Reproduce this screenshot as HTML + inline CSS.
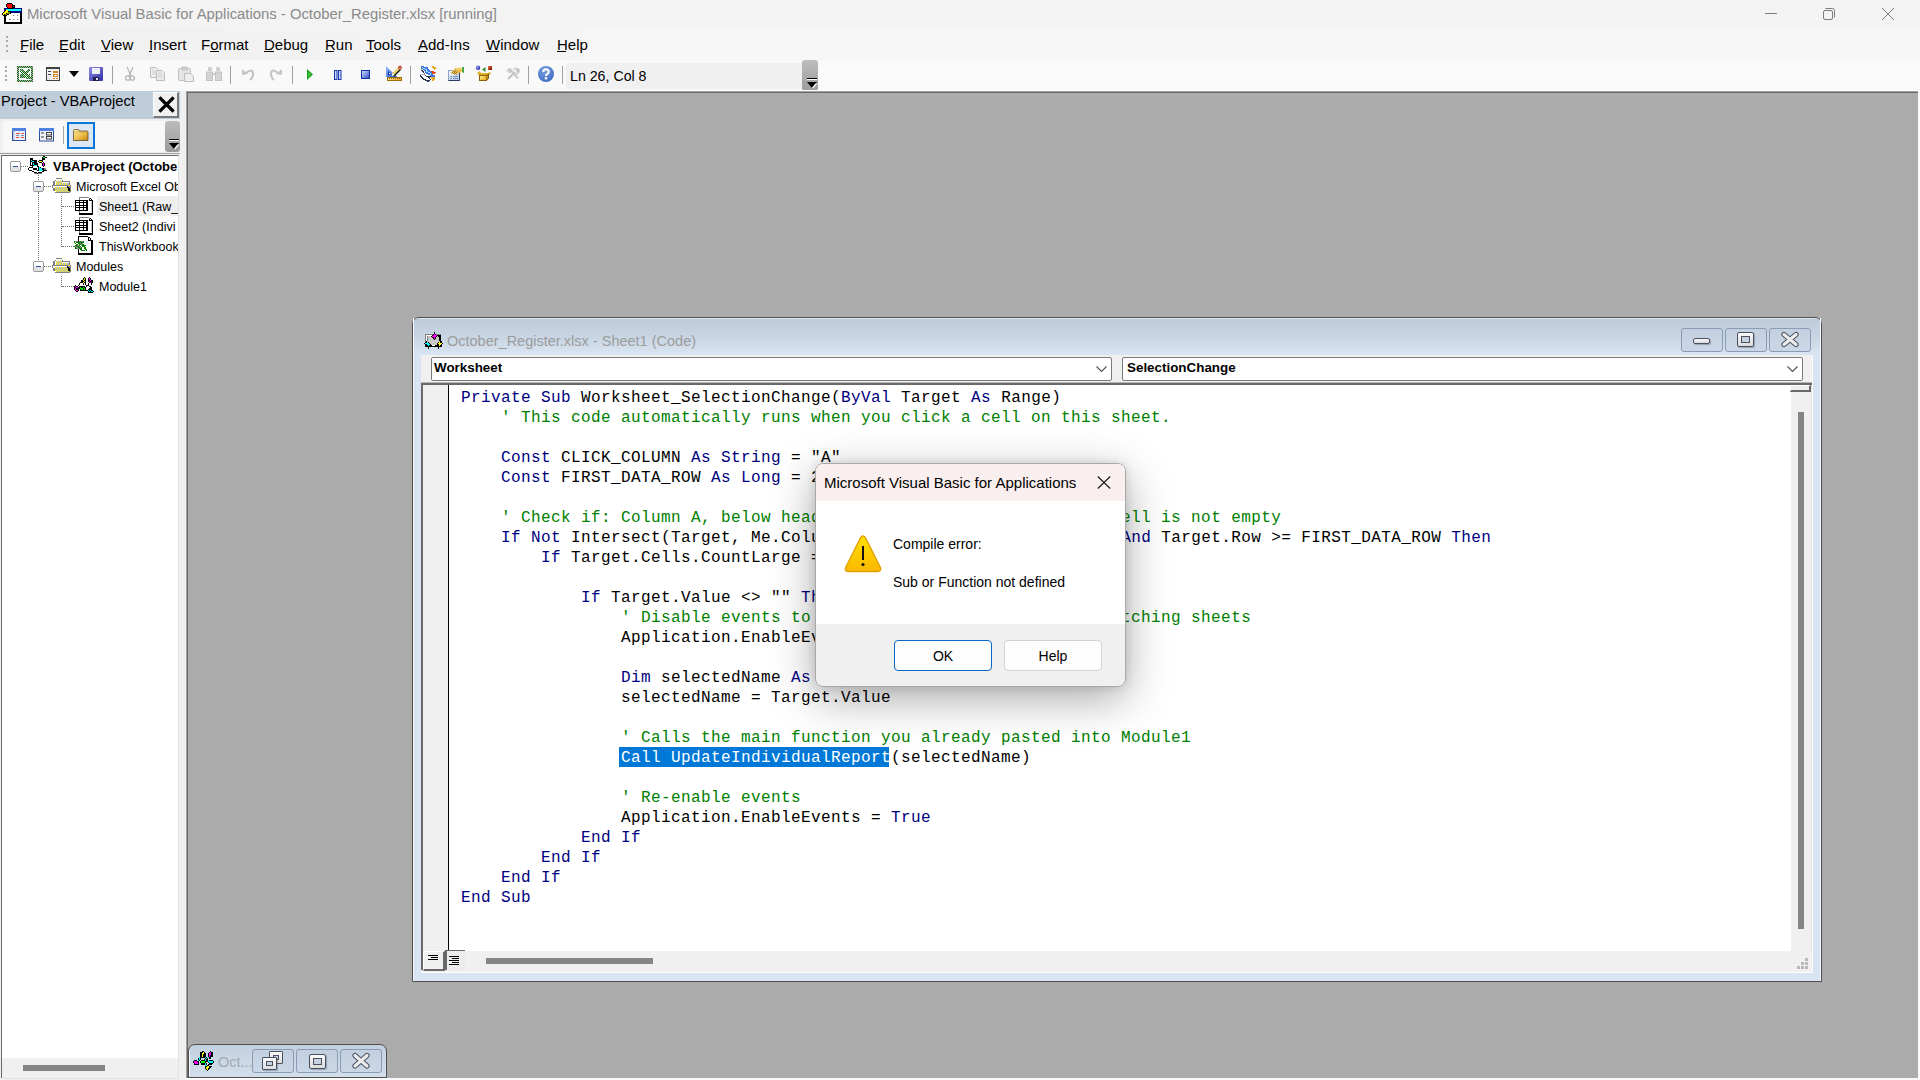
<!DOCTYPE html>
<html><head><meta charset="utf-8">
<style>
*{margin:0;padding:0;box-sizing:border-box}
html,body{width:1920px;height:1080px;overflow:hidden;background:#fafafa;font-family:"Liberation Sans",sans-serif}
.a{position:absolute}
.t{position:absolute;white-space:nowrap;line-height:1}
svg{position:absolute;overflow:visible}
#titlebar{left:0;top:0;width:1920px;height:29px;background:#f3f3f3}
#titletext{left:27px;top:7px;font-size:14.85px;color:#8a8a8a}
#menubar{left:0;top:29px;width:583px;height:31px;background:linear-gradient(to right,#f0f0f0,#f4f4f4)}
#menubar2{left:583px;top:29px;width:1337px;height:31px;background:#f7f7f7}
.menu{top:37px;font-size:15px;color:#000}
.u{position:absolute;height:1px;background:#000;top:51px}
#toolbar{left:3px;top:60px;width:815px;height:31px;background:#f9f9f9;border-radius:4px 0 0 0}
.sep{position:absolute;top:66px;width:1px;height:18px;background:#a0a0a0}
.grip{position:absolute;width:2px;height:2px;background:#a8a8a8}
#mdi{left:186px;top:91px;width:1732px;height:987px;background:#ababab;border-left:1px solid #a2a2a2;border-top:1px solid #a2a2a2;box-shadow:inset 1px 1px 0 #696969}
#proj{left:0;top:91px;width:186px;height:989px;background:#f0f0f0}
.code{position:absolute;font-family:"Liberation Mono",monospace;font-size:16px;letter-spacing:0.4px;line-height:20px;white-space:pre;color:#000}
.kw{color:#00007f}
.cm{color:#008000}
.sel{color:#fff}
.cbtn{width:42px;height:24px;border:1px solid #8b9bb5;border-radius:3px;background:linear-gradient(#c3d0df,#cad7e6)}
.combo{background:#fff;border:1px solid #7a7a7a;border-radius:2px}
</style></head><body>
<!-- title bar -->
<div id="titlebar" class="a"></div>
<svg style="left:0px;top:0px" width="24" height="24" viewBox="0 0 24 24" shape-rendering="crispEdges"><rect x="7" y="3" width="5" height="1" fill="#000"/><rect x="6" y="4" width="1" height="1" fill="#000"/><rect x="7" y="4" width="5" height="1" fill="#ff0000"/><rect x="12" y="4" width="1" height="1" fill="#000"/><rect x="6" y="5" width="1" height="1" fill="#000"/><rect x="7" y="5" width="5" height="1" fill="#ff0000"/><rect x="12" y="5" width="3" height="1" fill="#000"/><rect x="6" y="6" width="1" height="1" fill="#000"/><rect x="7" y="6" width="5" height="1" fill="#ff0000"/><rect x="12" y="6" width="1" height="1" fill="#000"/><rect x="13" y="6" width="1" height="1" fill="#ff0000"/><rect x="14" y="6" width="1" height="1" fill="#000"/><rect x="7" y="7" width="1" height="1" fill="#000"/><rect x="8" y="7" width="4" height="1" fill="#ff0000"/><rect x="12" y="7" width="3" height="1" fill="#000"/><rect x="4" y="8" width="4" height="1" fill="#000080"/><rect x="8" y="8" width="5" height="1" fill="#000"/><rect x="13" y="8" width="9" height="1" fill="#000080"/><rect x="4" y="9" width="2" height="1" fill="#000080"/><rect x="6" y="9" width="15" height="1" fill="#00ffff"/><rect x="21" y="9" width="1" height="1" fill="#000080"/><rect x="4" y="10" width="1" height="1" fill="#000080"/><rect x="5" y="10" width="1" height="1" fill="#000"/><rect x="6" y="10" width="2" height="1" fill="#ffff00"/><rect x="8" y="10" width="13" height="1" fill="#00ffff"/><rect x="21" y="10" width="1" height="1" fill="#000080"/><rect x="4" y="11" width="1" height="1" fill="#000"/><rect x="5" y="11" width="3" height="1" fill="#ffff00"/><rect x="8" y="11" width="2" height="1" fill="#000"/><rect x="10" y="11" width="12" height="1" fill="#000080"/><rect x="3" y="12" width="1" height="1" fill="#000"/><rect x="4" y="12" width="4" height="1" fill="#ffff00"/><rect x="8" y="12" width="2" height="1" fill="#808000"/><rect x="10" y="12" width="1" height="1" fill="#000"/><rect x="11" y="12" width="11" height="1" fill="#000080"/><rect x="2" y="13" width="1" height="1" fill="#000"/><rect x="3" y="13" width="3" height="1" fill="#ffff00"/><rect x="6" y="13" width="1" height="1" fill="#000"/><rect x="7" y="13" width="3" height="1" fill="#808000"/><rect x="10" y="13" width="1" height="1" fill="#000"/><rect x="11" y="13" width="9" height="1" fill="#fff"/><rect x="20" y="13" width="2" height="1" fill="#000"/><rect x="2" y="14" width="1" height="1" fill="#000"/><rect x="3" y="14" width="1" height="1" fill="#ffff00"/><rect x="4" y="14" width="1" height="1" fill="#000"/><rect x="5" y="14" width="2" height="1" fill="#808000"/><rect x="7" y="14" width="2" height="1" fill="#000"/><rect x="9" y="14" width="11" height="1" fill="#fff"/><rect x="20" y="14" width="2" height="1" fill="#000"/><rect x="3" y="15" width="4" height="1" fill="#000"/><rect x="7" y="15" width="6" height="1" fill="#fff"/><rect x="13" y="15" width="1" height="1" fill="#808080"/><rect x="14" y="15" width="3" height="1" fill="#fff"/><rect x="17" y="15" width="1" height="1" fill="#808080"/><rect x="18" y="15" width="2" height="1" fill="#fff"/><rect x="20" y="15" width="2" height="1" fill="#000"/><rect x="4" y="16" width="2" height="1" fill="#000"/><rect x="6" y="16" width="14" height="1" fill="#fff"/><rect x="20" y="16" width="2" height="1" fill="#000"/><rect x="4" y="17" width="2" height="1" fill="#000"/><rect x="6" y="17" width="14" height="1" fill="#fff"/><rect x="20" y="17" width="2" height="1" fill="#000"/><rect x="4" y="18" width="2" height="1" fill="#000"/><rect x="6" y="18" width="14" height="1" fill="#fff"/><rect x="20" y="18" width="2" height="1" fill="#000"/><rect x="4" y="19" width="2" height="1" fill="#000"/><rect x="6" y="19" width="3" height="1" fill="#fff"/><rect x="9" y="19" width="2" height="1" fill="#808080"/><rect x="11" y="19" width="2" height="1" fill="#fff"/><rect x="13" y="19" width="1" height="1" fill="#808080"/><rect x="14" y="19" width="3" height="1" fill="#fff"/><rect x="17" y="19" width="1" height="1" fill="#808080"/><rect x="18" y="19" width="2" height="1" fill="#fff"/><rect x="20" y="19" width="2" height="1" fill="#000"/><rect x="4" y="20" width="2" height="1" fill="#000"/><rect x="6" y="20" width="14" height="1" fill="#fff"/><rect x="20" y="20" width="2" height="1" fill="#000"/><rect x="4" y="21" width="2" height="1" fill="#000"/><rect x="6" y="21" width="14" height="1" fill="#fff"/><rect x="20" y="21" width="2" height="1" fill="#000"/><rect x="4" y="22" width="18" height="1" fill="#000"/><rect x="4" y="23" width="18" height="1" fill="#000"/></svg>
<div id="titletext" class="t">Microsoft Visual Basic for Applications - October_Register.xlsx [running]</div>
<div class="a" style="left:1765px;top:13px;width:12px;height:1px;background:#7d7d7d"></div>
<svg style="left:1822px;top:7px" width="14" height="14" viewBox="0 0 14 14">
  <rect x="1.5" y="3.5" width="9" height="9" rx="1.5" fill="none" stroke="#7d7d7d"/>
  <path d="M3.5 1.5 H10.5 Q12.5 1.5 12.5 3.5 V10.5" fill="none" stroke="#7d7d7d"/>
</svg>
<svg style="left:1881px;top:7px" width="14" height="14" viewBox="0 0 14 14">
  <path d="M1 1 L13 13 M13 1 L1 13" stroke="#7d7d7d" stroke-width="1"/>
</svg>

<!-- menu bar -->
<div id="menubar" class="a"></div><div id="menubar2" class="a"></div>
<div class="grip" style="left:6px;top:36px"></div><div class="grip" style="left:6px;top:40px"></div><div class="grip" style="left:6px;top:45px"></div><div class="grip" style="left:6px;top:50px"></div>
<div class="t menu" style="left:20px">File</div><div class="u" style="left:20px;width:7px"></div>
<div class="t menu" style="left:59px">Edit</div><div class="u" style="left:59px;width:8px"></div>
<div class="t menu" style="left:101px">View</div><div class="u" style="left:101px;width:9px"></div>
<div class="t menu" style="left:149px">Insert</div><div class="u" style="left:149px;width:3px"></div>
<div class="t menu" style="left:201px">Format</div><div class="u" style="left:210px;width:9px"></div>
<div class="t menu" style="left:264px">Debug</div><div class="u" style="left:264px;width:10px"></div>
<div class="t menu" style="left:325px">Run</div><div class="u" style="left:325px;width:9px"></div>
<div class="t menu" style="left:366px">Tools</div><div class="u" style="left:366px;width:8px"></div>
<div class="t menu" style="left:418px">Add-Ins</div><div class="u" style="left:418px;width:9px"></div>
<div class="t menu" style="left:486px">Window</div><div class="u" style="left:486px;width:13px"></div>
<div class="t menu" style="left:557px">Help</div><div class="u" style="left:557px;width:9px"></div>

<!-- toolbar -->
<div id="toolbar" class="a"></div>
<div class="grip" style="left:5px;top:66px"></div><div class="grip" style="left:5px;top:70px"></div><div class="grip" style="left:5px;top:75px"></div><div class="grip" style="left:5px;top:79px"></div>
<!-- excel -->
<svg style="left:17px;top:66px" width="16" height="16" viewBox="0 0 16 16" shape-rendering="crispEdges"><rect x="0" y="0" width="1" height="1" fill="#008000"/><rect x="1" y="0" width="1" height="1" fill="#b49ab4"/><rect x="2" y="0" width="1" height="1" fill="#008000"/><rect x="3" y="0" width="1" height="1" fill="#b49ab4"/><rect x="4" y="0" width="1" height="1" fill="#008000"/><rect x="5" y="0" width="1" height="1" fill="#b49ab4"/><rect x="6" y="0" width="1" height="1" fill="#008000"/><rect x="7" y="0" width="1" height="1" fill="#b49ab4"/><rect x="8" y="0" width="1" height="1" fill="#008000"/><rect x="9" y="0" width="1" height="1" fill="#b49ab4"/><rect x="10" y="0" width="1" height="1" fill="#008000"/><rect x="11" y="0" width="1" height="1" fill="#b49ab4"/><rect x="12" y="0" width="1" height="1" fill="#008000"/><rect x="13" y="0" width="1" height="1" fill="#b49ab4"/><rect x="14" y="0" width="1" height="1" fill="#008000"/><rect x="15" y="0" width="1" height="1" fill="#b49ab4"/><rect x="0" y="1" width="1" height="1" fill="#b49ab4"/><rect x="1" y="1" width="1" height="1" fill="#008000"/><rect x="2" y="1" width="1" height="1" fill="#b49ab4"/><rect x="3" y="1" width="1" height="1" fill="#008000"/><rect x="4" y="1" width="1" height="1" fill="#b49ab4"/><rect x="5" y="1" width="1" height="1" fill="#008000"/><rect x="6" y="1" width="1" height="1" fill="#b49ab4"/><rect x="7" y="1" width="1" height="1" fill="#008000"/><rect x="8" y="1" width="1" height="1" fill="#b49ab4"/><rect x="9" y="1" width="1" height="1" fill="#008000"/><rect x="10" y="1" width="1" height="1" fill="#b49ab4"/><rect x="11" y="1" width="1" height="1" fill="#008000"/><rect x="12" y="1" width="1" height="1" fill="#b49ab4"/><rect x="13" y="1" width="1" height="1" fill="#008000"/><rect x="14" y="1" width="1" height="1" fill="#b49ab4"/><rect x="15" y="1" width="1" height="1" fill="#008000"/><rect x="0" y="2" width="1" height="1" fill="#008000"/><rect x="1" y="2" width="1" height="1" fill="#b49ab4"/><rect x="2" y="2" width="12" height="1" fill="#fff"/><rect x="14" y="2" width="1" height="1" fill="#008000"/><rect x="15" y="2" width="1" height="1" fill="#b49ab4"/><rect x="0" y="3" width="1" height="1" fill="#b49ab4"/><rect x="1" y="3" width="1" height="1" fill="#008000"/><rect x="2" y="3" width="1" height="1" fill="#fff"/><rect x="3" y="3" width="1" height="1" fill="#008000"/><rect x="4" y="3" width="1" height="1" fill="#b49ab4"/><rect x="5" y="3" width="1" height="1" fill="#008000"/><rect x="6" y="3" width="5" height="1" fill="#fff"/><rect x="11" y="3" width="1" height="1" fill="#008000"/><rect x="12" y="3" width="1" height="1" fill="#b49ab4"/><rect x="13" y="3" width="1" height="1" fill="#fff"/><rect x="14" y="3" width="1" height="1" fill="#b49ab4"/><rect x="15" y="3" width="1" height="1" fill="#008000"/><rect x="0" y="4" width="1" height="1" fill="#008000"/><rect x="1" y="4" width="1" height="1" fill="#b49ab4"/><rect x="2" y="4" width="1" height="1" fill="#fff"/><rect x="3" y="4" width="1" height="1" fill="#b49ab4"/><rect x="4" y="4" width="1" height="1" fill="#008000"/><rect x="5" y="4" width="1" height="1" fill="#b49ab4"/><rect x="6" y="4" width="1" height="1" fill="#008000"/><rect x="7" y="4" width="3" height="1" fill="#fff"/><rect x="10" y="4" width="1" height="1" fill="#008000"/><rect x="11" y="4" width="1" height="1" fill="#b49ab4"/><rect x="12" y="4" width="1" height="1" fill="#008000"/><rect x="13" y="4" width="1" height="1" fill="#fff"/><rect x="14" y="4" width="1" height="1" fill="#008000"/><rect x="15" y="4" width="1" height="1" fill="#b49ab4"/><rect x="0" y="5" width="1" height="1" fill="#b49ab4"/><rect x="1" y="5" width="1" height="1" fill="#008000"/><rect x="2" y="5" width="1" height="1" fill="#fff"/><rect x="3" y="5" width="1" height="1" fill="#008000"/><rect x="4" y="5" width="1" height="1" fill="#fff"/><rect x="5" y="5" width="1" height="1" fill="#008000"/><rect x="6" y="5" width="1" height="1" fill="#b49ab4"/><rect x="7" y="5" width="1" height="1" fill="#008000"/><rect x="8" y="5" width="1" height="1" fill="#fff"/><rect x="9" y="5" width="1" height="1" fill="#008000"/><rect x="10" y="5" width="1" height="1" fill="#b49ab4"/><rect x="11" y="5" width="1" height="1" fill="#008000"/><rect x="12" y="5" width="2" height="1" fill="#fff"/><rect x="14" y="5" width="1" height="1" fill="#b49ab4"/><rect x="15" y="5" width="1" height="1" fill="#008000"/><rect x="0" y="6" width="1" height="1" fill="#008000"/><rect x="1" y="6" width="1" height="1" fill="#b49ab4"/><rect x="2" y="6" width="2" height="1" fill="#fff"/><rect x="4" y="6" width="1" height="1" fill="#008000"/><rect x="5" y="6" width="1" height="1" fill="#fff"/><rect x="6" y="6" width="1" height="1" fill="#008000"/><rect x="7" y="6" width="1" height="1" fill="#b49ab4"/><rect x="8" y="6" width="1" height="1" fill="#008000"/><rect x="9" y="6" width="1" height="1" fill="#b49ab4"/><rect x="10" y="6" width="1" height="1" fill="#008000"/><rect x="11" y="6" width="3" height="1" fill="#fff"/><rect x="14" y="6" width="1" height="1" fill="#008000"/><rect x="15" y="6" width="1" height="1" fill="#b49ab4"/><rect x="0" y="7" width="1" height="1" fill="#b49ab4"/><rect x="1" y="7" width="1" height="1" fill="#008000"/><rect x="2" y="7" width="3" height="1" fill="#fff"/><rect x="5" y="7" width="1" height="1" fill="#008000"/><rect x="6" y="7" width="1" height="1" fill="#fff"/><rect x="7" y="7" width="1" height="1" fill="#008000"/><rect x="8" y="7" width="1" height="1" fill="#b49ab4"/><rect x="9" y="7" width="1" height="1" fill="#008000"/><rect x="10" y="7" width="4" height="1" fill="#fff"/><rect x="14" y="7" width="1" height="1" fill="#b49ab4"/><rect x="15" y="7" width="1" height="1" fill="#008000"/><rect x="0" y="8" width="1" height="1" fill="#008000"/><rect x="1" y="8" width="1" height="1" fill="#b49ab4"/><rect x="2" y="8" width="1" height="1" fill="#fff"/><rect x="3" y="8" width="1" height="1" fill="#b49ab4"/><rect x="4" y="8" width="1" height="1" fill="#008000"/><rect x="5" y="8" width="1" height="1" fill="#b49ab4"/><rect x="6" y="8" width="1" height="1" fill="#008000"/><rect x="7" y="8" width="1" height="1" fill="#fff"/><rect x="8" y="8" width="1" height="1" fill="#008000"/><rect x="9" y="8" width="1" height="1" fill="#b49ab4"/><rect x="10" y="8" width="1" height="1" fill="#008000"/><rect x="11" y="8" width="1" height="1" fill="#fff"/><rect x="12" y="8" width="1" height="1" fill="#008000"/><rect x="13" y="8" width="1" height="1" fill="#fff"/><rect x="14" y="8" width="1" height="1" fill="#008000"/><rect x="15" y="8" width="1" height="1" fill="#b49ab4"/><rect x="0" y="9" width="1" height="1" fill="#b49ab4"/><rect x="1" y="9" width="1" height="1" fill="#008000"/><rect x="2" y="9" width="1" height="1" fill="#fff"/><rect x="3" y="9" width="1" height="1" fill="#008000"/><rect x="4" y="9" width="1" height="1" fill="#b49ab4"/><rect x="5" y="9" width="1" height="1" fill="#008000"/><rect x="6" y="9" width="1" height="1" fill="#b49ab4"/><rect x="7" y="9" width="1" height="1" fill="#008000"/><rect x="8" y="9" width="1" height="1" fill="#fff"/><rect x="9" y="9" width="1" height="1" fill="#008000"/><rect x="10" y="9" width="1" height="1" fill="#b49ab4"/><rect x="11" y="9" width="1" height="1" fill="#008000"/><rect x="12" y="9" width="1" height="1" fill="#b49ab4"/><rect x="13" y="9" width="1" height="1" fill="#fff"/><rect x="14" y="9" width="1" height="1" fill="#b49ab4"/><rect x="15" y="9" width="1" height="1" fill="#008000"/><rect x="0" y="10" width="1" height="1" fill="#008000"/><rect x="1" y="10" width="1" height="1" fill="#b49ab4"/><rect x="2" y="10" width="1" height="1" fill="#fff"/><rect x="3" y="10" width="1" height="1" fill="#b49ab4"/><rect x="4" y="10" width="1" height="1" fill="#008000"/><rect x="5" y="10" width="1" height="1" fill="#b49ab4"/><rect x="6" y="10" width="1" height="1" fill="#008000"/><rect x="7" y="10" width="1" height="1" fill="#b49ab4"/><rect x="8" y="10" width="1" height="1" fill="#008000"/><rect x="9" y="10" width="1" height="1" fill="#fff"/><rect x="10" y="10" width="1" height="1" fill="#008000"/><rect x="11" y="10" width="1" height="1" fill="#b49ab4"/><rect x="12" y="10" width="1" height="1" fill="#008000"/><rect x="13" y="10" width="1" height="1" fill="#fff"/><rect x="14" y="10" width="1" height="1" fill="#008000"/><rect x="15" y="10" width="1" height="1" fill="#b49ab4"/><rect x="0" y="11" width="1" height="1" fill="#b49ab4"/><rect x="1" y="11" width="1" height="1" fill="#008000"/><rect x="2" y="11" width="1" height="1" fill="#fff"/><rect x="3" y="11" width="1" height="1" fill="#008000"/><rect x="4" y="11" width="1" height="1" fill="#b49ab4"/><rect x="5" y="11" width="1" height="1" fill="#008000"/><rect x="6" y="11" width="1" height="1" fill="#b49ab4"/><rect x="7" y="11" width="1" height="1" fill="#008000"/><rect x="8" y="11" width="1" height="1" fill="#fff"/><rect x="9" y="11" width="1" height="1" fill="#008000"/><rect x="10" y="11" width="1" height="1" fill="#fff"/><rect x="11" y="11" width="1" height="1" fill="#008000"/><rect x="12" y="11" width="1" height="1" fill="#b49ab4"/><rect x="13" y="11" width="1" height="1" fill="#008000"/><rect x="14" y="11" width="1" height="1" fill="#b49ab4"/><rect x="15" y="11" width="1" height="1" fill="#008000"/><rect x="0" y="12" width="1" height="1" fill="#008000"/><rect x="1" y="12" width="1" height="1" fill="#b49ab4"/><rect x="2" y="12" width="7" height="1" fill="#fff"/><rect x="9" y="12" width="1" height="1" fill="#b49ab4"/><rect x="10" y="12" width="1" height="1" fill="#008000"/><rect x="11" y="12" width="1" height="1" fill="#b49ab4"/><rect x="12" y="12" width="1" height="1" fill="#008000"/><rect x="13" y="12" width="1" height="1" fill="#b49ab4"/><rect x="14" y="12" width="1" height="1" fill="#008000"/><rect x="15" y="12" width="1" height="1" fill="#b49ab4"/><rect x="0" y="13" width="1" height="1" fill="#b49ab4"/><rect x="1" y="13" width="1" height="1" fill="#008000"/><rect x="2" y="13" width="12" height="1" fill="#fff"/><rect x="14" y="13" width="1" height="1" fill="#b49ab4"/><rect x="15" y="13" width="1" height="1" fill="#008000"/><rect x="0" y="14" width="1" height="1" fill="#008000"/><rect x="1" y="14" width="1" height="1" fill="#b49ab4"/><rect x="2" y="14" width="1" height="1" fill="#008000"/><rect x="3" y="14" width="1" height="1" fill="#b49ab4"/><rect x="4" y="14" width="1" height="1" fill="#008000"/><rect x="5" y="14" width="1" height="1" fill="#b49ab4"/><rect x="6" y="14" width="1" height="1" fill="#008000"/><rect x="7" y="14" width="1" height="1" fill="#b49ab4"/><rect x="8" y="14" width="1" height="1" fill="#008000"/><rect x="9" y="14" width="1" height="1" fill="#b49ab4"/><rect x="10" y="14" width="1" height="1" fill="#008000"/><rect x="11" y="14" width="1" height="1" fill="#b49ab4"/><rect x="12" y="14" width="1" height="1" fill="#008000"/><rect x="13" y="14" width="1" height="1" fill="#b49ab4"/><rect x="14" y="14" width="1" height="1" fill="#008000"/><rect x="15" y="14" width="1" height="1" fill="#b49ab4"/><rect x="0" y="15" width="1" height="1" fill="#b49ab4"/><rect x="1" y="15" width="1" height="1" fill="#008000"/><rect x="2" y="15" width="1" height="1" fill="#b49ab4"/><rect x="3" y="15" width="1" height="1" fill="#008000"/><rect x="4" y="15" width="1" height="1" fill="#b49ab4"/><rect x="5" y="15" width="1" height="1" fill="#008000"/><rect x="6" y="15" width="1" height="1" fill="#b49ab4"/><rect x="7" y="15" width="1" height="1" fill="#008000"/><rect x="8" y="15" width="1" height="1" fill="#b49ab4"/><rect x="9" y="15" width="1" height="1" fill="#008000"/><rect x="10" y="15" width="1" height="1" fill="#b49ab4"/><rect x="11" y="15" width="1" height="1" fill="#008000"/><rect x="12" y="15" width="1" height="1" fill="#b49ab4"/><rect x="13" y="15" width="1" height="1" fill="#008000"/><rect x="14" y="15" width="1" height="1" fill="#b49ab4"/><rect x="15" y="15" width="1" height="1" fill="#008000"/></svg>
<!-- userform -->
<svg style="left:46px;top:67px" width="15" height="14" viewBox="0 0 15 14">
  <rect x="0.5" y="0.5" width="13" height="13" fill="#f4f4f4" stroke="#404040"/>
  <rect x="0" y="0" width="14" height="2" fill="#404040"/>
  <rect x="2" y="4" width="3" height="1" fill="#404040"/><rect x="2" y="7" width="3" height="1" fill="#404040"/>
  <rect x="7" y="4" width="5" height="2" fill="#d08020"/><rect x="7.5" y="7.5" width="4" height="2" fill="none" stroke="#d08020"/>
  <rect x="7" y="11" width="2" height="1" fill="#d08020"/><rect x="10" y="11" width="2" height="1" fill="#d08020"/>
  <rect x="1" y="9" width="5" height="4" fill="#e8e8ec"/>
</svg>
<svg style="left:69px;top:71px" width="10" height="6" viewBox="0 0 10 6"><path d="M0 0 H10 L5 6 Z" fill="#000"/></svg>
<!-- save -->
<svg style="left:89px;top:67px" width="15" height="14" viewBox="0 0 15 14">
  <defs><linearGradient id="sv" x1="0" y1="0" x2="1" y2="1"><stop offset="0" stop-color="#8c8ce8"/><stop offset="1" stop-color="#3030a0"/></linearGradient></defs>
  <rect x="0" y="0" width="14" height="14" rx="1" fill="url(#sv)"/>
  <rect x="3" y="1" width="8" height="6" fill="#f0f0f8"/>
  <rect x="4" y="10" width="6" height="4" fill="#202050"/><rect x="7" y="11" width="2" height="2" fill="#e0e0e0"/>
</svg>
<div class="sep" style="left:112px"></div>
<!-- cut -->
<svg style="left:125px;top:67px" width="10" height="14" viewBox="0 0 10 14">
  <path d="M2 0 L6 9 M8 0 L4 9" stroke="#b8b8b8" stroke-width="1.3" fill="none"/>
  <circle cx="2.8" cy="11" r="2.2" fill="none" stroke="#b8b8b8" stroke-width="1.3"/><circle cx="7.2" cy="11" r="2.2" fill="none" stroke="#b8b8b8" stroke-width="1.3"/>
</svg>
<!-- copy -->
<svg style="left:150px;top:67px" width="16" height="14" viewBox="0 0 16 14">
  <path d="M0.5 0.5 H6 L8 2.5 V10.5 H0.5 Z" fill="#f0f0f0" stroke="#bdbdbd"/>
  <path d="M6.5 3.5 H12 L14.5 6 V13.5 H6.5 Z" fill="#ececec" stroke="#bdbdbd"/>
  <path d="M8 6 H11 M8 8 H13 M8 10 H13 M2 3 H5 M2 5 H6 M2 7 H6" stroke="#cfcfcf"/>
</svg>
<!-- paste -->
<svg style="left:178px;top:67px" width="16" height="15" viewBox="0 0 16 15">
  <rect x="0.5" y="1.5" width="12" height="12" rx="1" fill="#e4e4e4" stroke="#c0c0c0"/>
  <rect x="4" y="0" width="5" height="3" fill="#d0d0d0" stroke="#bdbdbd" stroke-width="0.8"/>
  <path d="M6.5 6.5 H12.5 L15.5 9.5 V14.5 H6.5 Z" fill="#eeeeee" stroke="#bdbdbd"/>
</svg>
<!-- find -->
<svg style="left:206px;top:67px" width="16" height="14" viewBox="0 0 16 14">
  <rect x="2" y="0" width="4" height="4" fill="#d0d0d0"/><rect x="10" y="0" width="4" height="4" fill="#d0d0d0"/>
  <rect x="0.5" y="5" width="6" height="8.5" fill="#d4d4d4" stroke="#c2c2c2"/><rect x="9.5" y="5" width="6" height="8.5" fill="#d4d4d4" stroke="#c2c2c2"/>
  <rect x="6" y="6" width="4" height="2" fill="#c8c8c8"/>
</svg>
<div class="sep" style="left:230px"></div>
<!-- undo / redo -->
<svg style="left:242px;top:67px" width="13" height="14" viewBox="0 0 13 14">
  <path d="M4 6 Q10 1 11 6 Q11.5 10 8 13" fill="none" stroke="#c4c4c4" stroke-width="2.2"/>
  <path d="M0 8 L0 2 L6 7 Z" fill="#c4c4c4"/>
</svg>
<svg style="left:269px;top:67px" width="13" height="14" viewBox="0 0 13 14">
  <path d="M9 6 Q3 1 2 6 Q1.5 10 5 13" fill="none" stroke="#c4c4c4" stroke-width="2.2"/>
  <path d="M13 8 L13 2 L7 7 Z" fill="#c4c4c4"/>
</svg>
<div class="sep" style="left:292px"></div>
<!-- run -->
<svg style="left:307px;top:69px" width="6" height="11" viewBox="0 0 6 11"><path d="M0 0 L6 5.5 L0 11 Z" fill="#1a9a1a"/><path d="M1 2 L4.5 5.5 L1 9 Z" fill="#30c030"/></svg>
<!-- pause -->
<svg style="left:334px;top:70px" width="8" height="10" viewBox="0 0 8 10"><rect x="0.5" y="0.5" width="2.5" height="9" fill="#c8d8ff" stroke="#1838a8"/><rect x="4.5" y="0.5" width="2.5" height="9" fill="#c8d8ff" stroke="#1838a8"/></svg>
<!-- stop -->
<svg style="left:361px;top:70px" width="9" height="9" viewBox="0 0 9 9">
  <defs><linearGradient id="st" x1="0" y1="0" x2="1" y2="1"><stop offset="0" stop-color="#d8e4ff"/><stop offset="1" stop-color="#2848c0"/></linearGradient></defs>
  <rect x="0.5" y="0.5" width="8" height="8" fill="url(#st)" stroke="#1030a0"/></svg>
<!-- design -->
<svg style="left:382px;top:62px" width="24" height="24" viewBox="0 0 24 24">
  <defs>
    <linearGradient id="dg1" x1="0" y1="0" x2="1" y2="1"><stop offset="0" stop-color="#9cc0ff"/><stop offset="1" stop-color="#1c48c8"/></linearGradient>
    <linearGradient id="dg2" x1="0" y1="0" x2="1" y2="0"><stop offset="0" stop-color="#ffe090"/><stop offset="1" stop-color="#ffa030"/></linearGradient>
  </defs>
  <path d="M4 4 L4 15 L15 15 Z" fill="url(#dg1)"/>
  <path d="M6 9 L6 13 L10 13 Z" fill="#1030a0"/>
  <rect x="7" y="11" width="1.2" height="1.2" fill="#fff"/>
  <path d="M10.5 13 L17.5 6" stroke="#e8d070" stroke-width="3"/>
  <path d="M12 14 L18.5 7.5" stroke="#101010" stroke-width="1.2"/>
  <path d="M10 13.5 L11.5 12" stroke="#f8f8f8" stroke-width="1.6"/>
  <circle cx="18" cy="5.5" r="2" fill="#c86050"/>
  <rect x="5.5" y="15.5" width="14" height="3" fill="url(#dg2)" stroke="#9a7000" stroke-width="1"/>
  <path d="M7 16h1v1h-1zM9 16h1v1h-1zM11 16h1v1h-1zM13 16h1v1h-1zM15 16h1v1h-1zM17 16h1v1h-1z" fill="#9a7000"/>
</svg>
<div class="sep" style="left:410px"></div>
<!-- project explorer -->
<svg style="left:418px;top:62px" width="24" height="20" viewBox="0 0 24 20" shape-rendering="crispEdges"><rect x="3" y="4" width="3" height="1" fill="#3c78e0"/><rect x="14" y="4" width="2" height="1" fill="#e8a828"/><rect x="3" y="5" width="1" height="1" fill="#3c78e0"/><rect x="4" y="5" width="1" height="1" fill="#a8dcff"/><rect x="5" y="5" width="5" height="1" fill="#3c78e0"/><rect x="14" y="5" width="4" height="1" fill="#e8a828"/><rect x="3" y="6" width="1" height="1" fill="#808080"/><rect x="4" y="6" width="1" height="1" fill="#3c78e0"/><rect x="5" y="6" width="2" height="1" fill="#a8dcff"/><rect x="7" y="6" width="3" height="1" fill="#3c78e0"/><rect x="15" y="6" width="3" height="1" fill="#e8a828"/><rect x="3" y="7" width="1" height="1" fill="#808080"/><rect x="5" y="7" width="2" height="1" fill="#3c78e0"/><rect x="7" y="7" width="2" height="1" fill="#a8dcff"/><rect x="9" y="7" width="2" height="1" fill="#3c78e0"/><rect x="16" y="7" width="1" height="1" fill="#e8a828"/><rect x="3" y="8" width="1" height="1" fill="#808080"/><rect x="4" y="8" width="1" height="1" fill="#24344c"/><rect x="6" y="8" width="2" height="1" fill="#3c78e0"/><rect x="8" y="8" width="1" height="1" fill="#a8dcff"/><rect x="9" y="8" width="3" height="1" fill="#3c78e0"/><rect x="4" y="9" width="2" height="1" fill="#24344c"/><rect x="6" y="9" width="1" height="1" fill="#fff"/><rect x="7" y="9" width="1" height="1" fill="#3c78e0"/><rect x="8" y="9" width="2" height="1" fill="#a8dcff"/><rect x="10" y="9" width="3" height="1" fill="#3c78e0"/><rect x="13" y="9" width="3" height="1" fill="#e84a18"/><rect x="5" y="10" width="1" height="1" fill="#24344c"/><rect x="6" y="10" width="1" height="1" fill="#fff"/><rect x="7" y="10" width="3" height="1" fill="#3c78e0"/><rect x="10" y="10" width="2" height="1" fill="#a8dcff"/><rect x="12" y="10" width="2" height="1" fill="#3c78e0"/><rect x="14" y="10" width="4" height="1" fill="#e84a18"/><rect x="6" y="11" width="1" height="1" fill="#808080"/><rect x="7" y="11" width="1" height="1" fill="#fff"/><rect x="8" y="11" width="4" height="1" fill="#3c78e0"/><rect x="12" y="11" width="1" height="1" fill="#a8dcff"/><rect x="13" y="11" width="1" height="1" fill="#3c78e0"/><rect x="14" y="11" width="3" height="1" fill="#e84a18"/><rect x="2" y="12" width="4" height="1" fill="#b8c4d8"/><rect x="6" y="12" width="1" height="1" fill="#808080"/><rect x="7" y="12" width="3" height="1" fill="#fff"/><rect x="10" y="12" width="2" height="1" fill="#3c78e0"/><rect x="12" y="12" width="1" height="1" fill="#a8dcff"/><rect x="13" y="12" width="2" height="1" fill="#3c78e0"/><rect x="2" y="13" width="1" height="1" fill="#24344c"/><rect x="3" y="13" width="4" height="1" fill="#fff"/><rect x="7" y="13" width="1" height="1" fill="#24344c"/><rect x="8" y="13" width="4" height="1" fill="#fff"/><rect x="12" y="13" width="5" height="1" fill="#3c78e0"/><rect x="2" y="14" width="2" height="1" fill="#24344c"/><rect x="4" y="14" width="4" height="1" fill="#fff"/><rect x="8" y="14" width="5" height="1" fill="#24344c"/><rect x="13" y="14" width="4" height="1" fill="#3c78e0"/><rect x="3" y="15" width="2" height="1" fill="#24344c"/><rect x="5" y="15" width="5" height="1" fill="#fff"/><rect x="10" y="15" width="2" height="1" fill="#24344c"/><rect x="13" y="15" width="4" height="1" fill="#e8a828"/><rect x="4" y="16" width="2" height="1" fill="#24344c"/><rect x="6" y="16" width="5" height="1" fill="#fff"/><rect x="11" y="16" width="1" height="1" fill="#24344c"/><rect x="13" y="16" width="4" height="1" fill="#e8a828"/><rect x="5" y="17" width="3" height="1" fill="#24344c"/><rect x="8" y="17" width="4" height="1" fill="#fff"/><rect x="12" y="17" width="1" height="1" fill="#24344c"/><rect x="14" y="17" width="3" height="1" fill="#e8a828"/><rect x="7" y="18" width="5" height="1" fill="#24344c"/><rect x="14" y="18" width="2" height="1" fill="#e8a828"/><rect x="9" y="19" width="2" height="1" fill="#24344c"/></svg>
<!-- properties -->
<svg style="left:446px;top:62px" width="24" height="24" viewBox="0 0 24 24">
  <defs>
    <linearGradient id="pf" x1="0" y1="0" x2="1" y2="1"><stop offset="0" stop-color="#f6faff"/><stop offset="1" stop-color="#a8c4f4"/></linearGradient>
    <linearGradient id="ph" x1="0" y1="0" x2="1" y2="1"><stop offset="0" stop-color="#fff0a0"/><stop offset="1" stop-color="#e8a010"/></linearGradient>
    <pattern id="chk" width="2" height="2" patternUnits="userSpaceOnUse"><rect width="1" height="1" fill="#6a5020"/><rect x="1" y="1" width="1" height="1" fill="#6a5020"/></pattern>
  </defs>
  <rect x="2.5" y="8.5" width="11" height="10" fill="url(#pf)" stroke="#8ea4c4"/>
  <path d="M13.5 8.5 V18.5 H2.5" fill="none" stroke="#2a3a5a"/>
  <rect x="4" y="14" width="2" height="1" fill="#8090b0"/><rect x="7" y="14" width="5" height="1" fill="#8090b0"/>
  <rect x="4" y="16" width="2" height="1" fill="#8090b0"/><rect x="7" y="16" width="5" height="1" fill="#8090b0"/>
  <path d="M4 11 L9 6 L15 5.5 L16 8 L15 10.5 L12 11 L10.5 13 Z" fill="url(#ph)"/>
  <path d="M5 11 L9 7 L12 10 L10.5 12.5 Z" fill="url(#chk)" opacity="0.75"/>
  <path d="M16 5 L18 5 L18 11.5 L16 9.5 Z" fill="#48a848"/>
</svg>
<!-- object browser -->
<svg style="left:474px;top:62px" width="24" height="24" viewBox="0 0 24 24">
  <defs>
    <radialGradient id="ob1" cx="0.35" cy="0.35" r="0.7"><stop offset="0" stop-color="#a0a8ff"/><stop offset="1" stop-color="#2020a0"/></radialGradient>
    <linearGradient id="obr" x1="0" y1="0" x2="1" y2="1"><stop offset="0" stop-color="#ff8040"/><stop offset="1" stop-color="#600000"/></linearGradient>
    <linearGradient id="obx" x1="0" y1="0" x2="1" y2="1"><stop offset="0" stop-color="#fff8a0"/><stop offset="1" stop-color="#e0a000"/></linearGradient>
  </defs>
  <circle cx="4" cy="5.8" r="2.2" fill="url(#ob1)"/>
  <path d="M8 7.5 L11.5 5 L11.5 10 Z" fill="#309030"/>
  <rect x="14" y="4" width="4" height="4" fill="url(#obr)"/>
  <path d="M3 11.5 L5.5 9 L7 11 H14 L16 10 L17 11.5 L14.5 13.5 V16.5 L12.5 18.5 H5 V13 Z" fill="#e0b020"/>
  <rect x="5.5" y="13.5" width="7" height="5" fill="url(#obx)" stroke="#8a6010" stroke-width="1"/>
  <path d="M12.5 13.5 L14.5 12 V16.5 L12.5 18.5" fill="#c89010" stroke="#6a4a10" stroke-width="0.8"/>
</svg>
<!-- toolbox disabled -->
<svg style="left:506px;top:67px" width="14" height="14" viewBox="0 0 14 14">
  <path d="M2 12 L9 5" stroke="#c4c4c4" stroke-width="2.2"/>
  <path d="M7.5 2.5 Q9.5 0.5 12 2 L10.5 3.5 L11.5 4.5 L13 3 Q13.5 5.5 11.5 6.5 Q10.5 7 9.5 6.5" fill="none" stroke="#c4c4c4" stroke-width="1.4"/>
  <path d="M4 2.5 L12 11.5" stroke="#c8c8c8" stroke-width="2"/>
  <path d="M1 3.5 L3.5 1 L6 3.5 L3.5 6 Z" fill="#d0d0d0" stroke="#bcbcbc" stroke-width="0.8"/>
</svg>
<div class="sep" style="left:528px"></div>
<!-- help -->
<svg style="left:538px;top:66px" width="16" height="16" viewBox="0 0 16 16">
  <defs><radialGradient id="hg" cx="0.4" cy="0.3" r="0.8"><stop offset="0" stop-color="#7aa0e0"/><stop offset="1" stop-color="#3a68c0"/></radialGradient></defs>
  <circle cx="8" cy="8" r="8" fill="url(#hg)"/>
  <path d="M5.3 6 Q5.3 3.3 8 3.3 Q10.8 3.3 10.8 5.8 Q10.8 7.3 9 8.2 Q8 8.8 8 10" fill="none" stroke="#fff" stroke-width="2"/>
  <rect x="6.8" y="11.2" width="2.4" height="2.2" fill="#fff"/>
</svg>
<div class="sep" style="left:562px"></div>
<div class="a" style="left:566px;top:63px;width:237px;height:26px;background:#f0f0f0"></div>
<div class="t" style="left:570px;top:69px;font-size:14.2px;color:#000">Ln 26, Col 8</div>
<div class="a" style="left:802px;top:60px;width:16px;height:31px;border-radius:3px;background:linear-gradient(#bdbdbd,#9c9c9c)"></div>
<div class="a" style="left:807px;top:78px;width:10px;height:1px;background:#000"></div>
<div class="a" style="left:807px;top:79px;width:10px;height:1px;background:#fff"></div>
<svg style="left:807px;top:82px" width="10" height="6" viewBox="0 0 10 6"><path d="M0 0 H10 L5 6 Z" fill="#000"/><path d="M5.5 6 L9.5 1.5" stroke="#fff" stroke-width="1.2"/></svg>


<!-- project pane -->
<div id="proj" class="a"></div>
<div class="a" style="left:0;top:91px;width:180px;height:28px;background:#bfcddb"></div>
<div class="t" style="left:1px;top:94px;font-size:14.7px;color:#000">Project - VBAProject</div>
<div class="a" style="left:153px;top:92px;width:26px;height:26px;background:#f0f0f0;border-top:1px solid #fff;border-left:1px solid #fff;border-right:2px solid #7a7a7a;border-bottom:2px solid #7a7a7a"></div>
<svg style="left:158px;top:96px" width="17" height="17" viewBox="0 0 17 17"><path d="M2.5 2.5 L14.5 14.5 M14.5 2.5 L2.5 14.5" stroke="#000" stroke-width="3.2" stroke-linecap="square"/></svg>
<div class="a" style="left:3px;top:121px;width:177px;height:31px;background:#f8f8f8;border-radius:4px 0 0 0"></div>
<svg style="left:12px;top:128px" width="15" height="14" viewBox="0 0 15 14">
  <rect x="0.5" y="0.5" width="13" height="12" fill="#e8eefa" stroke="#3050a0"/>
  <rect x="0" y="0" width="14" height="3" fill="#5080e0"/>
  <rect x="1" y="3" width="1.5" height="9" fill="#c0c8d8"/>
  <path d="M4 5.5 H8 M9.5 5.5 H12 M4 7.5 H7 M9 7.5 H12 M4 9.5 H7 M9 9.5 H12" stroke="#f05030" stroke-width="1.2"/>
  <path d="M4 7.5 H7 M9 7.5 H12" stroke="#7090c0" stroke-width="1.2"/>
</svg>
<svg style="left:39px;top:128px" width="16" height="14" viewBox="0 0 16 14">
  <rect x="0.5" y="0.5" width="14" height="12.5" fill="#eef2fa" stroke="#3050a0"/>
  <rect x="0" y="0" width="15" height="3" fill="#5080e0"/>
  <path d="M2 5 H5 M2 9 H5" stroke="#404040" stroke-width="1.2"/>
  <rect x="7.5" y="4.5" width="5" height="2.5" fill="#fff" stroke="#404040"/>
  <rect x="7.5" y="8.5" width="5" height="2.5" fill="#fff" stroke="#404040"/>
</svg>
<div class="a" style="left:63px;top:126px;width:1px;height:18px;background:#a8a8a8"></div>
<div class="a" style="left:67px;top:122px;width:28px;height:27px;background:#dde8f4;border:2px solid #0a78d8"></div>
<svg style="left:73px;top:129px" width="16" height="12" viewBox="0 0 16 12">
  <defs><linearGradient id="fd" x1="0" y1="0" x2="1" y2="1"><stop offset="0" stop-color="#fff4a8"/><stop offset="0.6" stop-color="#e8b840"/><stop offset="1" stop-color="#c88010"/></linearGradient></defs>
  <path d="M0.5 1.5 Q0.5 0.5 1.5 0.5 H5.5 L6.5 2 H14 Q15 2 15 3 V11.5 H0.5 Z" fill="url(#fd)" stroke="#5a4a30" stroke-width="0.8"/>
  <path d="M0.5 3 H15" stroke="#b89040" stroke-width="0.6"/>
</svg>
<div class="a" style="left:165px;top:121px;width:15px;height:31px;border-radius:3px;background:linear-gradient(#bcbcbc,#9a9a9a)"></div>
<div class="a" style="left:169px;top:139px;width:10px;height:1px;background:#000"></div>
<div class="a" style="left:169px;top:140px;width:10px;height:1px;background:#fff"></div>
<svg style="left:169px;top:143px" width="10" height="6" viewBox="0 0 10 6"><path d="M0 0 H10 L5 6 Z" fill="#000"/><path d="M5.5 6 L9.5 1.5" stroke="#fff" stroke-width="1.2"/></svg>
<!-- tree -->
<div class="a" style="left:0;top:153px;width:180px;height:1px;background:#a0a0a0"></div>
<div class="a" style="left:1px;top:155px;width:178px;height:924px;background:#fff;border-left:1px solid #696969;border-top:1px solid #696969;border-right:1px solid #e3e3e3"></div>
<div class="a" style="left:97px;top:196px;width:81px;height:20px;background:#efefef"></div>
<!-- tree lines -->
<div class="a" style="left:21px;top:166px;width:7px;height:0;border-top:1px dotted #707070"></div>
<div class="a" style="left:38px;top:175px;width:0;height:7px;border-left:1px dotted #707070"></div>
<div class="a" style="left:38px;top:192px;width:0;height:70px;border-left:1px dotted #707070"></div>
<div class="a" style="left:44px;top:186px;width:7px;height:0;border-top:1px dotted #707070"></div>
<div class="a" style="left:44px;top:266px;width:7px;height:0;border-top:1px dotted #707070"></div>
<div class="a" style="left:61px;top:196px;width:0;height:51px;border-left:1px dotted #707070"></div>
<div class="a" style="left:61px;top:276px;width:0;height:11px;border-left:1px dotted #707070"></div>
<div class="a" style="left:62px;top:206px;width:12px;height:0;border-top:1px dotted #707070"></div>
<div class="a" style="left:62px;top:226px;width:12px;height:0;border-top:1px dotted #707070"></div>
<div class="a" style="left:62px;top:246px;width:12px;height:0;border-top:1px dotted #707070"></div>
<div class="a" style="left:62px;top:286px;width:12px;height:0;border-top:1px dotted #707070"></div>
<!-- expanders -->
<div class="a" style="left:10px;top:161px;width:11px;height:11px;border:1px solid #9a9a9a;border-radius:2px;background:linear-gradient(#fff 45%,#e2e2e2 55%)"><div class="a" style="left:2px;top:4px;width:5px;height:1px;background:#3050a0"></div></div>
<div class="a" style="left:33px;top:181px;width:11px;height:11px;border:1px solid #9a9a9a;border-radius:2px;background:linear-gradient(#fff 45%,#e2e2e2 55%)"><div class="a" style="left:2px;top:4px;width:5px;height:1px;background:#3050a0"></div></div>
<div class="a" style="left:33px;top:261px;width:11px;height:11px;border:1px solid #9a9a9a;border-radius:2px;background:linear-gradient(#fff 45%,#e2e2e2 55%)"><div class="a" style="left:2px;top:4px;width:5px;height:1px;background:#3050a0"></div></div>
<!-- icons -->
<svg style="left:26px;top:154px" width="22" height="20" viewBox="0 0 22 20" shape-rendering="crispEdges"><rect x="17" y="2" width="2" height="1" fill="#000"/><rect x="16" y="3" width="1" height="1" fill="#000"/><rect x="17" y="3" width="2" height="1" fill="#00ff00"/><rect x="19" y="3" width="2" height="1" fill="#000"/><rect x="4" y="4" width="3" height="1" fill="#000"/><rect x="16" y="4" width="3" height="1" fill="#000"/><rect x="4" y="5" width="3" height="1" fill="#000"/><rect x="16" y="5" width="3" height="1" fill="#000"/><rect x="4" y="6" width="1" height="1" fill="#000"/><rect x="5" y="6" width="1" height="1" fill="#00ffff"/><rect x="6" y="6" width="5" height="1" fill="#000"/><rect x="13" y="6" width="4" height="1" fill="#000"/><rect x="4" y="7" width="2" height="1" fill="#000"/><rect x="6" y="7" width="2" height="1" fill="#00ffff"/><rect x="8" y="7" width="3" height="1" fill="#000"/><rect x="12" y="7" width="1" height="1" fill="#000"/><rect x="13" y="7" width="3" height="1" fill="#ffff00"/><rect x="16" y="7" width="1" height="1" fill="#000"/><rect x="4" y="8" width="1" height="1" fill="#000"/><rect x="5" y="8" width="1" height="1" fill="#fff"/><rect x="6" y="8" width="5" height="1" fill="#000"/><rect x="13" y="8" width="3" height="1" fill="#000"/><rect x="17" y="8" width="1" height="1" fill="#000"/><rect x="4" y="9" width="1" height="1" fill="#000"/><rect x="5" y="9" width="1" height="1" fill="#fff"/><rect x="6" y="9" width="1" height="1" fill="#000"/><rect x="7" y="9" width="1" height="1" fill="#00ffff"/><rect x="8" y="9" width="4" height="1" fill="#000"/><rect x="16" y="9" width="1" height="1" fill="#000"/><rect x="17" y="9" width="1" height="1" fill="#ff00ff"/><rect x="18" y="9" width="1" height="1" fill="#000"/><rect x="4" y="10" width="1" height="1" fill="#000"/><rect x="5" y="10" width="1" height="1" fill="#fff"/><rect x="6" y="10" width="1" height="1" fill="#000"/><rect x="7" y="10" width="1" height="1" fill="#00ffff"/><rect x="8" y="10" width="4" height="1" fill="#000"/><rect x="16" y="10" width="1" height="1" fill="#000"/><rect x="17" y="10" width="1" height="1" fill="#ff00ff"/><rect x="18" y="10" width="1" height="1" fill="#000"/><rect x="4" y="11" width="4" height="1" fill="#000"/><rect x="8" y="11" width="3" height="1" fill="#00ffff"/><rect x="11" y="11" width="1" height="1" fill="#000"/><rect x="16" y="11" width="1" height="1" fill="#000"/><rect x="17" y="11" width="1" height="1" fill="#ff00ff"/><rect x="18" y="11" width="1" height="1" fill="#000"/><rect x="6" y="12" width="1" height="1" fill="#000"/><rect x="7" y="12" width="3" height="1" fill="#fff"/><rect x="11" y="12" width="2" height="1" fill="#000"/><rect x="17" y="12" width="1" height="1" fill="#000"/><rect x="3" y="13" width="4" height="1" fill="#000"/><rect x="7" y="13" width="3" height="1" fill="#fff"/><rect x="12" y="13" width="1" height="1" fill="#000"/><rect x="13" y="13" width="1" height="1" fill="#00ffff"/><rect x="14" y="13" width="1" height="1" fill="#000"/><rect x="2" y="14" width="1" height="1" fill="#000"/><rect x="7" y="14" width="4" height="1" fill="#000"/><rect x="12" y="14" width="1" height="1" fill="#000"/><rect x="13" y="14" width="3" height="1" fill="#00ffff"/><rect x="16" y="14" width="2" height="1" fill="#000"/><rect x="18" y="14" width="2" height="1" fill="#808080"/><rect x="2" y="15" width="1" height="1" fill="#000"/><rect x="7" y="15" width="4" height="1" fill="#000"/><rect x="12" y="15" width="1" height="1" fill="#000"/><rect x="13" y="15" width="3" height="1" fill="#00ffff"/><rect x="16" y="15" width="2" height="1" fill="#000"/><rect x="18" y="15" width="2" height="1" fill="#808080"/><rect x="3" y="16" width="3" height="1" fill="#000"/><rect x="11" y="16" width="2" height="1" fill="#000"/><rect x="13" y="16" width="4" height="1" fill="#00ffff"/><rect x="17" y="16" width="4" height="1" fill="#000"/><rect x="6" y="17" width="2" height="1" fill="#000"/><rect x="16" y="17" width="2" height="1" fill="#000"/><rect x="8" y="18" width="3" height="1" fill="#000"/><rect x="12" y="18" width="4" height="1" fill="#000"/><rect x="8" y="19" width="3" height="1" fill="#808080"/><rect x="11" y="19" width="1" height="1" fill="#000"/><rect x="12" y="19" width="4" height="1" fill="#808080"/></svg>
<svg style="left:50px;top:174px" width="22" height="19" viewBox="0 0 22 19" shape-rendering="crispEdges"><rect x="6" y="4" width="6" height="1" fill="#808080"/><rect x="5" y="6" width="1" height="1" fill="#808080"/><rect x="12" y="6" width="1" height="1" fill="#808080"/><rect x="3" y="7" width="2" height="1" fill="#808080"/><rect x="5" y="7" width="1" height="1" fill="#fff"/><rect x="6" y="7" width="1" height="1" fill="#ffff00"/><rect x="7" y="7" width="1" height="1" fill="#a8a8e8"/><rect x="8" y="7" width="1" height="1" fill="#ffff00"/><rect x="9" y="7" width="1" height="1" fill="#a8a8e8"/><rect x="10" y="7" width="1" height="1" fill="#ffff00"/><rect x="11" y="7" width="1" height="1" fill="#a8a8e8"/><rect x="12" y="7" width="8" height="1" fill="#808080"/><rect x="3" y="8" width="2" height="1" fill="#808080"/><rect x="5" y="8" width="1" height="1" fill="#fff"/><rect x="6" y="8" width="1" height="1" fill="#a8a8e8"/><rect x="7" y="8" width="1" height="1" fill="#ffff00"/><rect x="8" y="8" width="1" height="1" fill="#a8a8e8"/><rect x="9" y="8" width="1" height="1" fill="#ffff00"/><rect x="10" y="8" width="1" height="1" fill="#a8a8e8"/><rect x="11" y="8" width="1" height="1" fill="#ffff00"/><rect x="12" y="8" width="7" height="1" fill="#fff"/><rect x="19" y="8" width="1" height="1" fill="#808080"/><rect x="3" y="9" width="2" height="1" fill="#808080"/><rect x="5" y="9" width="1" height="1" fill="#fff"/><rect x="6" y="9" width="1" height="1" fill="#ffff00"/><rect x="7" y="9" width="1" height="1" fill="#a8a8e8"/><rect x="8" y="9" width="1" height="1" fill="#ffff00"/><rect x="9" y="9" width="1" height="1" fill="#a8a8e8"/><rect x="10" y="9" width="1" height="1" fill="#ffff00"/><rect x="11" y="9" width="1" height="1" fill="#a8a8e8"/><rect x="12" y="9" width="1" height="1" fill="#ffff00"/><rect x="13" y="9" width="1" height="1" fill="#a8a8e8"/><rect x="14" y="9" width="1" height="1" fill="#ffff00"/><rect x="15" y="9" width="1" height="1" fill="#a8a8e8"/><rect x="16" y="9" width="1" height="1" fill="#ffff00"/><rect x="17" y="9" width="2" height="1" fill="#a8a8e8"/><rect x="19" y="9" width="1" height="1" fill="#808080"/><rect x="3" y="10" width="2" height="1" fill="#808080"/><rect x="5" y="10" width="1" height="1" fill="#fff"/><rect x="6" y="10" width="1" height="1" fill="#ffff00"/><rect x="7" y="10" width="1" height="1" fill="#a8a8e8"/><rect x="8" y="10" width="1" height="1" fill="#ffff00"/><rect x="9" y="10" width="1" height="1" fill="#a8a8e8"/><rect x="10" y="10" width="1" height="1" fill="#ffff00"/><rect x="11" y="10" width="1" height="1" fill="#a8a8e8"/><rect x="12" y="10" width="1" height="1" fill="#ffff00"/><rect x="13" y="10" width="1" height="1" fill="#a8a8e8"/><rect x="14" y="10" width="1" height="1" fill="#ffff00"/><rect x="15" y="10" width="1" height="1" fill="#a8a8e8"/><rect x="16" y="10" width="1" height="1" fill="#ffff00"/><rect x="17" y="10" width="2" height="1" fill="#a8a8e8"/><rect x="19" y="10" width="1" height="1" fill="#808080"/><rect x="2" y="11" width="16" height="1" fill="#808080"/><rect x="18" y="11" width="2" height="1" fill="#ffff00"/><rect x="20" y="11" width="1" height="1" fill="#808080"/><rect x="2" y="12" width="1" height="1" fill="#808080"/><rect x="3" y="12" width="14" height="1" fill="#fff"/><rect x="17" y="12" width="1" height="1" fill="#000"/><rect x="18" y="12" width="1" height="1" fill="#a8a8e8"/><rect x="19" y="12" width="2" height="1" fill="#808080"/><rect x="2" y="13" width="1" height="1" fill="#808080"/><rect x="3" y="13" width="2" height="1" fill="#fff"/><rect x="5" y="13" width="1" height="1" fill="#ffff00"/><rect x="6" y="13" width="1" height="1" fill="#a8a8e8"/><rect x="7" y="13" width="1" height="1" fill="#ffff00"/><rect x="8" y="13" width="1" height="1" fill="#a8a8e8"/><rect x="9" y="13" width="1" height="1" fill="#ffff00"/><rect x="10" y="13" width="1" height="1" fill="#a8a8e8"/><rect x="11" y="13" width="1" height="1" fill="#ffff00"/><rect x="12" y="13" width="1" height="1" fill="#a8a8e8"/><rect x="13" y="13" width="1" height="1" fill="#ffff00"/><rect x="14" y="13" width="1" height="1" fill="#a8a8e8"/><rect x="15" y="13" width="1" height="1" fill="#ffff00"/><rect x="16" y="13" width="1" height="1" fill="#a8a8e8"/><rect x="17" y="13" width="2" height="1" fill="#000"/><rect x="19" y="13" width="2" height="1" fill="#808080"/><rect x="3" y="14" width="2" height="1" fill="#808080"/><rect x="5" y="14" width="1" height="1" fill="#ffff00"/><rect x="6" y="14" width="1" height="1" fill="#a8a8e8"/><rect x="7" y="14" width="1" height="1" fill="#ffff00"/><rect x="8" y="14" width="1" height="1" fill="#a8a8e8"/><rect x="9" y="14" width="1" height="1" fill="#ffff00"/><rect x="10" y="14" width="1" height="1" fill="#a8a8e8"/><rect x="11" y="14" width="1" height="1" fill="#ffff00"/><rect x="12" y="14" width="1" height="1" fill="#a8a8e8"/><rect x="13" y="14" width="1" height="1" fill="#ffff00"/><rect x="14" y="14" width="1" height="1" fill="#a8a8e8"/><rect x="15" y="14" width="1" height="1" fill="#ffff00"/><rect x="16" y="14" width="1" height="1" fill="#a8a8e8"/><rect x="17" y="14" width="1" height="1" fill="#ffff00"/><rect x="18" y="14" width="2" height="1" fill="#000"/><rect x="20" y="14" width="1" height="1" fill="#808080"/><rect x="3" y="15" width="2" height="1" fill="#808080"/><rect x="5" y="15" width="1" height="1" fill="#a8a8e8"/><rect x="6" y="15" width="1" height="1" fill="#ffff00"/><rect x="7" y="15" width="1" height="1" fill="#a8a8e8"/><rect x="8" y="15" width="1" height="1" fill="#ffff00"/><rect x="9" y="15" width="1" height="1" fill="#a8a8e8"/><rect x="10" y="15" width="1" height="1" fill="#ffff00"/><rect x="11" y="15" width="1" height="1" fill="#a8a8e8"/><rect x="12" y="15" width="1" height="1" fill="#ffff00"/><rect x="13" y="15" width="1" height="1" fill="#a8a8e8"/><rect x="14" y="15" width="1" height="1" fill="#ffff00"/><rect x="15" y="15" width="1" height="1" fill="#a8a8e8"/><rect x="16" y="15" width="1" height="1" fill="#ffff00"/><rect x="17" y="15" width="1" height="1" fill="#a8a8e8"/><rect x="18" y="15" width="2" height="1" fill="#000"/><rect x="20" y="15" width="1" height="1" fill="#808080"/><rect x="3" y="16" width="2" height="1" fill="#808080"/><rect x="5" y="16" width="1" height="1" fill="#ffff00"/><rect x="6" y="16" width="1" height="1" fill="#a8a8e8"/><rect x="7" y="16" width="1" height="1" fill="#ffff00"/><rect x="8" y="16" width="1" height="1" fill="#a8a8e8"/><rect x="9" y="16" width="1" height="1" fill="#ffff00"/><rect x="10" y="16" width="1" height="1" fill="#a8a8e8"/><rect x="11" y="16" width="1" height="1" fill="#ffff00"/><rect x="12" y="16" width="1" height="1" fill="#a8a8e8"/><rect x="13" y="16" width="1" height="1" fill="#ffff00"/><rect x="14" y="16" width="1" height="1" fill="#a8a8e8"/><rect x="15" y="16" width="1" height="1" fill="#ffff00"/><rect x="16" y="16" width="1" height="1" fill="#a8a8e8"/><rect x="17" y="16" width="1" height="1" fill="#ffff00"/><rect x="18" y="16" width="2" height="1" fill="#000"/><rect x="20" y="16" width="1" height="1" fill="#808080"/><rect x="5" y="17" width="1" height="1" fill="#fff"/><rect x="6" y="17" width="1" height="1" fill="#ffff00"/><rect x="7" y="17" width="1" height="1" fill="#a8a8e8"/><rect x="8" y="17" width="1" height="1" fill="#ffff00"/><rect x="9" y="17" width="1" height="1" fill="#a8a8e8"/><rect x="10" y="17" width="1" height="1" fill="#ffff00"/><rect x="11" y="17" width="1" height="1" fill="#a8a8e8"/><rect x="12" y="17" width="1" height="1" fill="#ffff00"/><rect x="13" y="17" width="1" height="1" fill="#a8a8e8"/><rect x="14" y="17" width="1" height="1" fill="#ffff00"/><rect x="15" y="17" width="1" height="1" fill="#a8a8e8"/><rect x="16" y="17" width="1" height="1" fill="#ffff00"/><rect x="17" y="17" width="1" height="1" fill="#a8a8e8"/><rect x="18" y="17" width="1" height="1" fill="#ffff00"/><rect x="19" y="17" width="2" height="1" fill="#808080"/><rect x="5" y="18" width="15" height="1" fill="#808080"/></svg>
<svg style="left:72px;top:194px" width="22" height="21" viewBox="0 0 22 21" shape-rendering="crispEdges"><rect x="7" y="3" width="10" height="1" fill="#808080"/><rect x="7" y="4" width="1" height="1" fill="#808080"/><rect x="17" y="4" width="1" height="1" fill="#808080"/><rect x="18" y="4" width="1" height="1" fill="#000"/><rect x="7" y="5" width="1" height="1" fill="#808080"/><rect x="17" y="5" width="1" height="1" fill="#000"/><rect x="18" y="5" width="1" height="1" fill="#fff"/><rect x="19" y="5" width="1" height="1" fill="#000"/><rect x="3" y="6" width="13" height="1" fill="#000"/><rect x="17" y="6" width="4" height="1" fill="#000"/><rect x="3" y="7" width="1" height="1" fill="#000"/><rect x="4" y="7" width="3" height="1" fill="#fff"/><rect x="7" y="7" width="1" height="1" fill="#000"/><rect x="8" y="7" width="3" height="1" fill="#fff"/><rect x="11" y="7" width="1" height="1" fill="#000"/><rect x="12" y="7" width="2" height="1" fill="#fff"/><rect x="14" y="7" width="2" height="1" fill="#000"/><rect x="20" y="7" width="1" height="1" fill="#000"/><rect x="3" y="8" width="13" height="1" fill="#000"/><rect x="19" y="8" width="1" height="1" fill="#c8c8c8"/><rect x="20" y="8" width="1" height="1" fill="#000"/><rect x="3" y="9" width="1" height="1" fill="#000"/><rect x="4" y="9" width="3" height="1" fill="#fff"/><rect x="7" y="9" width="1" height="1" fill="#000"/><rect x="8" y="9" width="3" height="1" fill="#fff"/><rect x="11" y="9" width="1" height="1" fill="#000"/><rect x="12" y="9" width="2" height="1" fill="#fff"/><rect x="14" y="9" width="2" height="1" fill="#000"/><rect x="19" y="9" width="1" height="1" fill="#c8c8c8"/><rect x="20" y="9" width="1" height="1" fill="#000"/><rect x="3" y="10" width="1" height="1" fill="#000"/><rect x="4" y="10" width="3" height="1" fill="#fff"/><rect x="7" y="10" width="1" height="1" fill="#000"/><rect x="8" y="10" width="3" height="1" fill="#fff"/><rect x="11" y="10" width="1" height="1" fill="#000"/><rect x="12" y="10" width="2" height="1" fill="#fff"/><rect x="14" y="10" width="2" height="1" fill="#000"/><rect x="19" y="10" width="1" height="1" fill="#c8c8c8"/><rect x="20" y="10" width="1" height="1" fill="#000"/><rect x="3" y="11" width="13" height="1" fill="#000"/><rect x="19" y="11" width="1" height="1" fill="#c8c8c8"/><rect x="20" y="11" width="1" height="1" fill="#000"/><rect x="3" y="12" width="1" height="1" fill="#000"/><rect x="4" y="12" width="3" height="1" fill="#fff"/><rect x="7" y="12" width="1" height="1" fill="#000"/><rect x="8" y="12" width="3" height="1" fill="#fff"/><rect x="11" y="12" width="1" height="1" fill="#000"/><rect x="12" y="12" width="2" height="1" fill="#fff"/><rect x="14" y="12" width="2" height="1" fill="#000"/><rect x="19" y="12" width="1" height="1" fill="#c8c8c8"/><rect x="20" y="12" width="1" height="1" fill="#000"/><rect x="3" y="13" width="13" height="1" fill="#000"/><rect x="19" y="13" width="1" height="1" fill="#c8c8c8"/><rect x="20" y="13" width="1" height="1" fill="#000"/><rect x="3" y="14" width="1" height="1" fill="#000"/><rect x="4" y="14" width="3" height="1" fill="#fff"/><rect x="7" y="14" width="1" height="1" fill="#000"/><rect x="8" y="14" width="3" height="1" fill="#fff"/><rect x="11" y="14" width="1" height="1" fill="#000"/><rect x="12" y="14" width="2" height="1" fill="#fff"/><rect x="14" y="14" width="2" height="1" fill="#000"/><rect x="19" y="14" width="1" height="1" fill="#c8c8c8"/><rect x="20" y="14" width="1" height="1" fill="#000"/><rect x="3" y="15" width="1" height="1" fill="#000"/><rect x="4" y="15" width="3" height="1" fill="#fff"/><rect x="7" y="15" width="1" height="1" fill="#000"/><rect x="8" y="15" width="3" height="1" fill="#fff"/><rect x="11" y="15" width="1" height="1" fill="#000"/><rect x="12" y="15" width="2" height="1" fill="#fff"/><rect x="14" y="15" width="2" height="1" fill="#000"/><rect x="19" y="15" width="1" height="1" fill="#c8c8c8"/><rect x="20" y="15" width="1" height="1" fill="#000"/><rect x="3" y="16" width="13" height="1" fill="#000"/><rect x="19" y="16" width="1" height="1" fill="#c8c8c8"/><rect x="20" y="16" width="1" height="1" fill="#000"/><rect x="7" y="17" width="1" height="1" fill="#808080"/><rect x="19" y="17" width="1" height="1" fill="#c8c8c8"/><rect x="20" y="17" width="1" height="1" fill="#000"/><rect x="7" y="18" width="1" height="1" fill="#808080"/><rect x="20" y="18" width="1" height="1" fill="#000"/><rect x="7" y="19" width="14" height="1" fill="#000"/><rect x="7" y="20" width="14" height="1" fill="#000"/></svg>
<svg style="left:72px;top:214px" width="22" height="21" viewBox="0 0 22 21" shape-rendering="crispEdges"><rect x="7" y="3" width="10" height="1" fill="#808080"/><rect x="7" y="4" width="1" height="1" fill="#808080"/><rect x="17" y="4" width="1" height="1" fill="#808080"/><rect x="18" y="4" width="1" height="1" fill="#000"/><rect x="7" y="5" width="1" height="1" fill="#808080"/><rect x="17" y="5" width="1" height="1" fill="#000"/><rect x="18" y="5" width="1" height="1" fill="#fff"/><rect x="19" y="5" width="1" height="1" fill="#000"/><rect x="3" y="6" width="13" height="1" fill="#000"/><rect x="17" y="6" width="4" height="1" fill="#000"/><rect x="3" y="7" width="1" height="1" fill="#000"/><rect x="4" y="7" width="3" height="1" fill="#fff"/><rect x="7" y="7" width="1" height="1" fill="#000"/><rect x="8" y="7" width="3" height="1" fill="#fff"/><rect x="11" y="7" width="1" height="1" fill="#000"/><rect x="12" y="7" width="2" height="1" fill="#fff"/><rect x="14" y="7" width="2" height="1" fill="#000"/><rect x="20" y="7" width="1" height="1" fill="#000"/><rect x="3" y="8" width="13" height="1" fill="#000"/><rect x="19" y="8" width="1" height="1" fill="#c8c8c8"/><rect x="20" y="8" width="1" height="1" fill="#000"/><rect x="3" y="9" width="1" height="1" fill="#000"/><rect x="4" y="9" width="3" height="1" fill="#fff"/><rect x="7" y="9" width="1" height="1" fill="#000"/><rect x="8" y="9" width="3" height="1" fill="#fff"/><rect x="11" y="9" width="1" height="1" fill="#000"/><rect x="12" y="9" width="2" height="1" fill="#fff"/><rect x="14" y="9" width="2" height="1" fill="#000"/><rect x="19" y="9" width="1" height="1" fill="#c8c8c8"/><rect x="20" y="9" width="1" height="1" fill="#000"/><rect x="3" y="10" width="1" height="1" fill="#000"/><rect x="4" y="10" width="3" height="1" fill="#fff"/><rect x="7" y="10" width="1" height="1" fill="#000"/><rect x="8" y="10" width="3" height="1" fill="#fff"/><rect x="11" y="10" width="1" height="1" fill="#000"/><rect x="12" y="10" width="2" height="1" fill="#fff"/><rect x="14" y="10" width="2" height="1" fill="#000"/><rect x="19" y="10" width="1" height="1" fill="#c8c8c8"/><rect x="20" y="10" width="1" height="1" fill="#000"/><rect x="3" y="11" width="13" height="1" fill="#000"/><rect x="19" y="11" width="1" height="1" fill="#c8c8c8"/><rect x="20" y="11" width="1" height="1" fill="#000"/><rect x="3" y="12" width="1" height="1" fill="#000"/><rect x="4" y="12" width="3" height="1" fill="#fff"/><rect x="7" y="12" width="1" height="1" fill="#000"/><rect x="8" y="12" width="3" height="1" fill="#fff"/><rect x="11" y="12" width="1" height="1" fill="#000"/><rect x="12" y="12" width="2" height="1" fill="#fff"/><rect x="14" y="12" width="2" height="1" fill="#000"/><rect x="19" y="12" width="1" height="1" fill="#c8c8c8"/><rect x="20" y="12" width="1" height="1" fill="#000"/><rect x="3" y="13" width="13" height="1" fill="#000"/><rect x="19" y="13" width="1" height="1" fill="#c8c8c8"/><rect x="20" y="13" width="1" height="1" fill="#000"/><rect x="3" y="14" width="1" height="1" fill="#000"/><rect x="4" y="14" width="3" height="1" fill="#fff"/><rect x="7" y="14" width="1" height="1" fill="#000"/><rect x="8" y="14" width="3" height="1" fill="#fff"/><rect x="11" y="14" width="1" height="1" fill="#000"/><rect x="12" y="14" width="2" height="1" fill="#fff"/><rect x="14" y="14" width="2" height="1" fill="#000"/><rect x="19" y="14" width="1" height="1" fill="#c8c8c8"/><rect x="20" y="14" width="1" height="1" fill="#000"/><rect x="3" y="15" width="1" height="1" fill="#000"/><rect x="4" y="15" width="3" height="1" fill="#fff"/><rect x="7" y="15" width="1" height="1" fill="#000"/><rect x="8" y="15" width="3" height="1" fill="#fff"/><rect x="11" y="15" width="1" height="1" fill="#000"/><rect x="12" y="15" width="2" height="1" fill="#fff"/><rect x="14" y="15" width="2" height="1" fill="#000"/><rect x="19" y="15" width="1" height="1" fill="#c8c8c8"/><rect x="20" y="15" width="1" height="1" fill="#000"/><rect x="3" y="16" width="13" height="1" fill="#000"/><rect x="19" y="16" width="1" height="1" fill="#c8c8c8"/><rect x="20" y="16" width="1" height="1" fill="#000"/><rect x="7" y="17" width="1" height="1" fill="#808080"/><rect x="19" y="17" width="1" height="1" fill="#c8c8c8"/><rect x="20" y="17" width="1" height="1" fill="#000"/><rect x="7" y="18" width="1" height="1" fill="#808080"/><rect x="20" y="18" width="1" height="1" fill="#000"/><rect x="7" y="19" width="14" height="1" fill="#000"/><rect x="7" y="20" width="14" height="1" fill="#000"/></svg>
<svg style="left:72px;top:234px" width="22" height="21" viewBox="0 0 22 21" shape-rendering="crispEdges"><rect x="6" y="2" width="10" height="1" fill="#000"/><rect x="6" y="3" width="1" height="1" fill="#000"/><rect x="16" y="3" width="2" height="1" fill="#000"/><rect x="6" y="4" width="1" height="1" fill="#000"/><rect x="16" y="4" width="1" height="1" fill="#000"/><rect x="17" y="4" width="1" height="1" fill="#fff"/><rect x="18" y="4" width="1" height="1" fill="#000"/><rect x="6" y="5" width="1" height="1" fill="#000"/><rect x="16" y="5" width="1" height="1" fill="#000"/><rect x="17" y="5" width="1" height="1" fill="#fff"/><rect x="18" y="5" width="1" height="1" fill="#000"/><rect x="6" y="6" width="1" height="1" fill="#000"/><rect x="16" y="6" width="5" height="1" fill="#000"/><rect x="2" y="7" width="1" height="1" fill="#008000"/><rect x="3" y="7" width="3" height="1" fill="#a080a0"/><rect x="6" y="7" width="1" height="1" fill="#000"/><rect x="7" y="7" width="1" height="1" fill="#a080a0"/><rect x="8" y="7" width="1" height="1" fill="#008000"/><rect x="9" y="7" width="2" height="1" fill="#a080a0"/><rect x="11" y="7" width="1" height="1" fill="#008000"/><rect x="19" y="7" width="2" height="1" fill="#000"/><rect x="2" y="8" width="1" height="1" fill="#008000"/><rect x="3" y="8" width="1" height="1" fill="#fff"/><rect x="4" y="8" width="8" height="1" fill="#008000"/><rect x="19" y="8" width="2" height="1" fill="#000"/><rect x="3" y="9" width="1" height="1" fill="#008000"/><rect x="4" y="9" width="2" height="1" fill="#fff"/><rect x="6" y="9" width="2" height="1" fill="#008000"/><rect x="8" y="9" width="1" height="1" fill="#a080a0"/><rect x="9" y="9" width="1" height="1" fill="#008000"/><rect x="10" y="9" width="1" height="1" fill="#a080a0"/><rect x="19" y="9" width="2" height="1" fill="#000"/><rect x="4" y="10" width="2" height="1" fill="#008000"/><rect x="6" y="10" width="1" height="1" fill="#fff"/><rect x="7" y="10" width="2" height="1" fill="#008000"/><rect x="9" y="10" width="1" height="1" fill="#a080a0"/><rect x="10" y="10" width="2" height="1" fill="#008000"/><rect x="19" y="10" width="2" height="1" fill="#000"/><rect x="3" y="11" width="2" height="1" fill="#008000"/><rect x="5" y="11" width="2" height="1" fill="#a080a0"/><rect x="7" y="11" width="1" height="1" fill="#008000"/><rect x="8" y="11" width="1" height="1" fill="#fff"/><rect x="9" y="11" width="1" height="1" fill="#a080a0"/><rect x="10" y="11" width="4" height="1" fill="#008000"/><rect x="19" y="11" width="2" height="1" fill="#000"/><rect x="2" y="12" width="1" height="1" fill="#008000"/><rect x="3" y="12" width="1" height="1" fill="#a080a0"/><rect x="4" y="12" width="3" height="1" fill="#008000"/><rect x="7" y="12" width="1" height="1" fill="#a080a0"/><rect x="8" y="12" width="1" height="1" fill="#008000"/><rect x="9" y="12" width="1" height="1" fill="#fff"/><rect x="10" y="12" width="3" height="1" fill="#008000"/><rect x="19" y="12" width="2" height="1" fill="#000"/><rect x="3" y="13" width="1" height="1" fill="#008000"/><rect x="4" y="13" width="2" height="1" fill="#a080a0"/><rect x="6" y="13" width="2" height="1" fill="#008000"/><rect x="8" y="13" width="1" height="1" fill="#a080a0"/><rect x="9" y="13" width="1" height="1" fill="#008000"/><rect x="10" y="13" width="2" height="1" fill="#fff"/><rect x="12" y="13" width="2" height="1" fill="#008000"/><rect x="19" y="13" width="2" height="1" fill="#000"/><rect x="3" y="14" width="2" height="1" fill="#008000"/><rect x="5" y="14" width="2" height="1" fill="#a080a0"/><rect x="7" y="14" width="3" height="1" fill="#008000"/><rect x="10" y="14" width="2" height="1" fill="#fff"/><rect x="12" y="14" width="2" height="1" fill="#008000"/><rect x="19" y="14" width="2" height="1" fill="#000"/><rect x="6" y="15" width="1" height="1" fill="#000"/><rect x="8" y="15" width="2" height="1" fill="#008000"/><rect x="10" y="15" width="3" height="1" fill="#fff"/><rect x="13" y="15" width="2" height="1" fill="#008000"/><rect x="19" y="15" width="2" height="1" fill="#000"/><rect x="6" y="16" width="1" height="1" fill="#000"/><rect x="9" y="16" width="4" height="1" fill="#008000"/><rect x="14" y="16" width="1" height="1" fill="#008000"/><rect x="19" y="16" width="2" height="1" fill="#000"/><rect x="6" y="17" width="1" height="1" fill="#000"/><rect x="19" y="17" width="2" height="1" fill="#000"/><rect x="6" y="18" width="1" height="1" fill="#000"/><rect x="19" y="18" width="2" height="1" fill="#000"/><rect x="6" y="19" width="15" height="1" fill="#000"/><rect x="6" y="20" width="15" height="1" fill="#000"/></svg>
<svg style="left:50px;top:254px" width="22" height="19" viewBox="0 0 22 19" shape-rendering="crispEdges"><rect x="6" y="4" width="6" height="1" fill="#808080"/><rect x="5" y="6" width="1" height="1" fill="#808080"/><rect x="12" y="6" width="1" height="1" fill="#808080"/><rect x="3" y="7" width="2" height="1" fill="#808080"/><rect x="5" y="7" width="1" height="1" fill="#fff"/><rect x="6" y="7" width="1" height="1" fill="#ffff00"/><rect x="7" y="7" width="1" height="1" fill="#a8a8e8"/><rect x="8" y="7" width="1" height="1" fill="#ffff00"/><rect x="9" y="7" width="1" height="1" fill="#a8a8e8"/><rect x="10" y="7" width="1" height="1" fill="#ffff00"/><rect x="11" y="7" width="1" height="1" fill="#a8a8e8"/><rect x="12" y="7" width="8" height="1" fill="#808080"/><rect x="3" y="8" width="2" height="1" fill="#808080"/><rect x="5" y="8" width="1" height="1" fill="#fff"/><rect x="6" y="8" width="1" height="1" fill="#a8a8e8"/><rect x="7" y="8" width="1" height="1" fill="#ffff00"/><rect x="8" y="8" width="1" height="1" fill="#a8a8e8"/><rect x="9" y="8" width="1" height="1" fill="#ffff00"/><rect x="10" y="8" width="1" height="1" fill="#a8a8e8"/><rect x="11" y="8" width="1" height="1" fill="#ffff00"/><rect x="12" y="8" width="7" height="1" fill="#fff"/><rect x="19" y="8" width="1" height="1" fill="#808080"/><rect x="3" y="9" width="2" height="1" fill="#808080"/><rect x="5" y="9" width="1" height="1" fill="#fff"/><rect x="6" y="9" width="1" height="1" fill="#ffff00"/><rect x="7" y="9" width="1" height="1" fill="#a8a8e8"/><rect x="8" y="9" width="1" height="1" fill="#ffff00"/><rect x="9" y="9" width="1" height="1" fill="#a8a8e8"/><rect x="10" y="9" width="1" height="1" fill="#ffff00"/><rect x="11" y="9" width="1" height="1" fill="#a8a8e8"/><rect x="12" y="9" width="1" height="1" fill="#ffff00"/><rect x="13" y="9" width="1" height="1" fill="#a8a8e8"/><rect x="14" y="9" width="1" height="1" fill="#ffff00"/><rect x="15" y="9" width="1" height="1" fill="#a8a8e8"/><rect x="16" y="9" width="1" height="1" fill="#ffff00"/><rect x="17" y="9" width="2" height="1" fill="#a8a8e8"/><rect x="19" y="9" width="1" height="1" fill="#808080"/><rect x="3" y="10" width="2" height="1" fill="#808080"/><rect x="5" y="10" width="1" height="1" fill="#fff"/><rect x="6" y="10" width="1" height="1" fill="#ffff00"/><rect x="7" y="10" width="1" height="1" fill="#a8a8e8"/><rect x="8" y="10" width="1" height="1" fill="#ffff00"/><rect x="9" y="10" width="1" height="1" fill="#a8a8e8"/><rect x="10" y="10" width="1" height="1" fill="#ffff00"/><rect x="11" y="10" width="1" height="1" fill="#a8a8e8"/><rect x="12" y="10" width="1" height="1" fill="#ffff00"/><rect x="13" y="10" width="1" height="1" fill="#a8a8e8"/><rect x="14" y="10" width="1" height="1" fill="#ffff00"/><rect x="15" y="10" width="1" height="1" fill="#a8a8e8"/><rect x="16" y="10" width="1" height="1" fill="#ffff00"/><rect x="17" y="10" width="2" height="1" fill="#a8a8e8"/><rect x="19" y="10" width="1" height="1" fill="#808080"/><rect x="2" y="11" width="16" height="1" fill="#808080"/><rect x="18" y="11" width="2" height="1" fill="#ffff00"/><rect x="20" y="11" width="1" height="1" fill="#808080"/><rect x="2" y="12" width="1" height="1" fill="#808080"/><rect x="3" y="12" width="14" height="1" fill="#fff"/><rect x="17" y="12" width="1" height="1" fill="#000"/><rect x="18" y="12" width="1" height="1" fill="#a8a8e8"/><rect x="19" y="12" width="2" height="1" fill="#808080"/><rect x="2" y="13" width="1" height="1" fill="#808080"/><rect x="3" y="13" width="2" height="1" fill="#fff"/><rect x="5" y="13" width="1" height="1" fill="#ffff00"/><rect x="6" y="13" width="1" height="1" fill="#a8a8e8"/><rect x="7" y="13" width="1" height="1" fill="#ffff00"/><rect x="8" y="13" width="1" height="1" fill="#a8a8e8"/><rect x="9" y="13" width="1" height="1" fill="#ffff00"/><rect x="10" y="13" width="1" height="1" fill="#a8a8e8"/><rect x="11" y="13" width="1" height="1" fill="#ffff00"/><rect x="12" y="13" width="1" height="1" fill="#a8a8e8"/><rect x="13" y="13" width="1" height="1" fill="#ffff00"/><rect x="14" y="13" width="1" height="1" fill="#a8a8e8"/><rect x="15" y="13" width="1" height="1" fill="#ffff00"/><rect x="16" y="13" width="1" height="1" fill="#a8a8e8"/><rect x="17" y="13" width="2" height="1" fill="#000"/><rect x="19" y="13" width="2" height="1" fill="#808080"/><rect x="3" y="14" width="2" height="1" fill="#808080"/><rect x="5" y="14" width="1" height="1" fill="#ffff00"/><rect x="6" y="14" width="1" height="1" fill="#a8a8e8"/><rect x="7" y="14" width="1" height="1" fill="#ffff00"/><rect x="8" y="14" width="1" height="1" fill="#a8a8e8"/><rect x="9" y="14" width="1" height="1" fill="#ffff00"/><rect x="10" y="14" width="1" height="1" fill="#a8a8e8"/><rect x="11" y="14" width="1" height="1" fill="#ffff00"/><rect x="12" y="14" width="1" height="1" fill="#a8a8e8"/><rect x="13" y="14" width="1" height="1" fill="#ffff00"/><rect x="14" y="14" width="1" height="1" fill="#a8a8e8"/><rect x="15" y="14" width="1" height="1" fill="#ffff00"/><rect x="16" y="14" width="1" height="1" fill="#a8a8e8"/><rect x="17" y="14" width="1" height="1" fill="#ffff00"/><rect x="18" y="14" width="2" height="1" fill="#000"/><rect x="20" y="14" width="1" height="1" fill="#808080"/><rect x="3" y="15" width="2" height="1" fill="#808080"/><rect x="5" y="15" width="1" height="1" fill="#a8a8e8"/><rect x="6" y="15" width="1" height="1" fill="#ffff00"/><rect x="7" y="15" width="1" height="1" fill="#a8a8e8"/><rect x="8" y="15" width="1" height="1" fill="#ffff00"/><rect x="9" y="15" width="1" height="1" fill="#a8a8e8"/><rect x="10" y="15" width="1" height="1" fill="#ffff00"/><rect x="11" y="15" width="1" height="1" fill="#a8a8e8"/><rect x="12" y="15" width="1" height="1" fill="#ffff00"/><rect x="13" y="15" width="1" height="1" fill="#a8a8e8"/><rect x="14" y="15" width="1" height="1" fill="#ffff00"/><rect x="15" y="15" width="1" height="1" fill="#a8a8e8"/><rect x="16" y="15" width="1" height="1" fill="#ffff00"/><rect x="17" y="15" width="1" height="1" fill="#a8a8e8"/><rect x="18" y="15" width="2" height="1" fill="#000"/><rect x="20" y="15" width="1" height="1" fill="#808080"/><rect x="3" y="16" width="2" height="1" fill="#808080"/><rect x="5" y="16" width="1" height="1" fill="#ffff00"/><rect x="6" y="16" width="1" height="1" fill="#a8a8e8"/><rect x="7" y="16" width="1" height="1" fill="#ffff00"/><rect x="8" y="16" width="1" height="1" fill="#a8a8e8"/><rect x="9" y="16" width="1" height="1" fill="#ffff00"/><rect x="10" y="16" width="1" height="1" fill="#a8a8e8"/><rect x="11" y="16" width="1" height="1" fill="#ffff00"/><rect x="12" y="16" width="1" height="1" fill="#a8a8e8"/><rect x="13" y="16" width="1" height="1" fill="#ffff00"/><rect x="14" y="16" width="1" height="1" fill="#a8a8e8"/><rect x="15" y="16" width="1" height="1" fill="#ffff00"/><rect x="16" y="16" width="1" height="1" fill="#a8a8e8"/><rect x="17" y="16" width="1" height="1" fill="#ffff00"/><rect x="18" y="16" width="2" height="1" fill="#000"/><rect x="20" y="16" width="1" height="1" fill="#808080"/><rect x="5" y="17" width="1" height="1" fill="#fff"/><rect x="6" y="17" width="1" height="1" fill="#ffff00"/><rect x="7" y="17" width="1" height="1" fill="#a8a8e8"/><rect x="8" y="17" width="1" height="1" fill="#ffff00"/><rect x="9" y="17" width="1" height="1" fill="#a8a8e8"/><rect x="10" y="17" width="1" height="1" fill="#ffff00"/><rect x="11" y="17" width="1" height="1" fill="#a8a8e8"/><rect x="12" y="17" width="1" height="1" fill="#ffff00"/><rect x="13" y="17" width="1" height="1" fill="#a8a8e8"/><rect x="14" y="17" width="1" height="1" fill="#ffff00"/><rect x="15" y="17" width="1" height="1" fill="#a8a8e8"/><rect x="16" y="17" width="1" height="1" fill="#ffff00"/><rect x="17" y="17" width="1" height="1" fill="#a8a8e8"/><rect x="18" y="17" width="1" height="1" fill="#ffff00"/><rect x="19" y="17" width="2" height="1" fill="#808080"/><rect x="5" y="18" width="15" height="1" fill="#808080"/></svg>
<svg style="left:72px;top:274px" width="22" height="19" viewBox="0 0 22 19" shape-rendering="crispEdges"><rect x="12" y="3" width="1" height="1" fill="#000"/><rect x="17" y="3" width="1" height="1" fill="#000"/><rect x="11" y="4" width="1" height="1" fill="#000"/><rect x="12" y="4" width="1" height="1" fill="#ffff00"/><rect x="13" y="4" width="1" height="1" fill="#000"/><rect x="16" y="4" width="1" height="1" fill="#000"/><rect x="17" y="4" width="1" height="1" fill="#ff00ff"/><rect x="18" y="4" width="1" height="1" fill="#000"/><rect x="11" y="5" width="1" height="1" fill="#000"/><rect x="12" y="5" width="1" height="1" fill="#ffff00"/><rect x="13" y="5" width="1" height="1" fill="#000"/><rect x="16" y="5" width="1" height="1" fill="#000"/><rect x="17" y="5" width="1" height="1" fill="#ff00ff"/><rect x="18" y="5" width="1" height="1" fill="#000"/><rect x="9" y="6" width="2" height="1" fill="#000"/><rect x="11" y="6" width="1" height="1" fill="#ffff00"/><rect x="12" y="6" width="2" height="1" fill="#000"/><rect x="16" y="6" width="2" height="1" fill="#000"/><rect x="18" y="6" width="1" height="1" fill="#ff00ff"/><rect x="19" y="6" width="2" height="1" fill="#000"/><rect x="9" y="7" width="3" height="1" fill="#000"/><rect x="12" y="7" width="1" height="1" fill="#ffff00"/><rect x="13" y="7" width="1" height="1" fill="#000"/><rect x="16" y="7" width="1" height="1" fill="#000"/><rect x="17" y="7" width="1" height="1" fill="#ff00ff"/><rect x="18" y="7" width="3" height="1" fill="#000"/><rect x="8" y="8" width="3" height="1" fill="#000"/><rect x="11" y="8" width="1" height="1" fill="#ffff00"/><rect x="12" y="8" width="2" height="1" fill="#000"/><rect x="17" y="8" width="1" height="1" fill="#000"/><rect x="18" y="8" width="1" height="1" fill="#ff00ff"/><rect x="19" y="8" width="2" height="1" fill="#000"/><rect x="7" y="9" width="1" height="1" fill="#000"/><rect x="11" y="9" width="1" height="1" fill="#000"/><rect x="13" y="9" width="1" height="1" fill="#000"/><rect x="16" y="9" width="1" height="1" fill="#000"/><rect x="19" y="9" width="1" height="1" fill="#000"/><rect x="7" y="10" width="1" height="1" fill="#000"/><rect x="11" y="10" width="1" height="1" fill="#000"/><rect x="13" y="10" width="1" height="1" fill="#000"/><rect x="16" y="10" width="1" height="1" fill="#000"/><rect x="19" y="10" width="1" height="1" fill="#000"/><rect x="3" y="11" width="1" height="1" fill="#000"/><rect x="6" y="11" width="1" height="1" fill="#000"/><rect x="14" y="11" width="3" height="1" fill="#000"/><rect x="2" y="12" width="1" height="1" fill="#000"/><rect x="3" y="12" width="1" height="1" fill="#ff00ff"/><rect x="4" y="12" width="2" height="1" fill="#000"/><rect x="7" y="12" width="6" height="1" fill="#000"/><rect x="14" y="12" width="1" height="1" fill="#000"/><rect x="17" y="12" width="2" height="1" fill="#000"/><rect x="2" y="13" width="2" height="1" fill="#000"/><rect x="4" y="13" width="2" height="1" fill="#ff00ff"/><rect x="6" y="13" width="2" height="1" fill="#000"/><rect x="8" y="13" width="1" height="1" fill="#00ff00"/><rect x="9" y="13" width="2" height="1" fill="#000"/><rect x="11" y="13" width="1" height="1" fill="#00ff00"/><rect x="12" y="13" width="2" height="1" fill="#000"/><rect x="18" y="13" width="2" height="1" fill="#000"/><rect x="2" y="14" width="1" height="1" fill="#000"/><rect x="3" y="14" width="1" height="1" fill="#ff00ff"/><rect x="4" y="14" width="4" height="1" fill="#000"/><rect x="8" y="14" width="3" height="1" fill="#00ff00"/><rect x="11" y="14" width="1" height="1" fill="#000"/><rect x="12" y="14" width="1" height="1" fill="#00ff00"/><rect x="13" y="14" width="1" height="1" fill="#000"/><rect x="17" y="14" width="3" height="1" fill="#000"/><rect x="2" y="15" width="1" height="1" fill="#000"/><rect x="3" y="15" width="1" height="1" fill="#ff00ff"/><rect x="4" y="15" width="3" height="1" fill="#000"/><rect x="8" y="15" width="1" height="1" fill="#000"/><rect x="9" y="15" width="2" height="1" fill="#00ff00"/><rect x="11" y="15" width="1" height="1" fill="#000"/><rect x="12" y="15" width="1" height="1" fill="#00ff00"/><rect x="13" y="15" width="1" height="1" fill="#000"/><rect x="16" y="15" width="4" height="1" fill="#000"/><rect x="3" y="16" width="1" height="1" fill="#000"/><rect x="4" y="16" width="2" height="1" fill="#ff00ff"/><rect x="6" y="16" width="1" height="1" fill="#000"/><rect x="8" y="16" width="8" height="1" fill="#000"/><rect x="16" y="16" width="1" height="1" fill="#00ffff"/><rect x="17" y="16" width="1" height="1" fill="#000"/><rect x="18" y="16" width="1" height="1" fill="#00ffff"/><rect x="19" y="16" width="2" height="1" fill="#000"/><rect x="4" y="17" width="2" height="1" fill="#000"/><rect x="16" y="17" width="1" height="1" fill="#000"/><rect x="17" y="17" width="1" height="1" fill="#00ffff"/><rect x="18" y="17" width="1" height="1" fill="#000"/><rect x="19" y="17" width="2" height="1" fill="#00ffff"/><rect x="21" y="17" width="1" height="1" fill="#000"/><rect x="16" y="18" width="5" height="1" fill="#000"/></svg>
<div class="a" style="left:0;top:150px;width:178px;height:160px;overflow:hidden">
<div class="t" style="left:53px;top:10px;font-size:13px;font-weight:bold;color:#000">VBAProject (Octobe</div>
<div class="t" style="left:76px;top:31px;font-size:12.5px;color:#000">Microsoft Excel Ob</div>
<div class="t" style="left:99px;top:51px;font-size:12.5px;color:#000">Sheet1 (Raw_</div>
<div class="t" style="left:99px;top:71px;font-size:12.5px;color:#000">Sheet2 (Indivi</div>
<div class="t" style="left:99px;top:91px;font-size:12.5px;color:#000">ThisWorkbook</div>
<div class="t" style="left:76px;top:111px;font-size:12.5px;color:#000">Modules</div>
<div class="t" style="left:99px;top:131px;font-size:12.5px;color:#000">Module1</div>
</div>
<div class="a" style="left:180px;top:153px;width:6px;height:927px;background:#f0f0f0"></div>
<!-- h scrollbar -->
<div class="a" style="left:2px;top:1058px;width:176px;height:20px;background:#f0f0f0"></div>
<div class="a" style="left:23px;top:1065px;width:82px;height:6px;background:#858585"></div>
<div class="a" style="left:0;top:1078px;width:180px;height:2px;background:#f0f0f0"></div>
<div class="a" style="left:2px;top:1078px;width:177px;height:1px;background:#e2e2e2"></div>


<!-- MDI -->
<div class="a" style="left:186px;top:90px;width:1734px;height:1px;background:#fff"></div>
<div id="mdi" class="a"></div>
<div class="a" style="left:412px;top:317px;width:1410px;height:665px;border:1px solid #4f4f4f;border-radius:7px 7px 0 0;background:#d8e4f1"></div>
<div class="a" style="left:413px;top:318px;width:1408px;height:37px;border-radius:6px 6px 0 0;background:linear-gradient(#bccbdb,#c9d6e4 55%,#d9e5f2)"></div>
<div class="a" style="left:419px;top:318px;width:1396px;height:1px;background:#e4ebf3"></div>
<div class="a" style="left:413px;top:318px;width:1px;height:663px;background:#f4f8fc"></div>
<div class="a" style="left:1820px;top:318px;width:1px;height:663px;background:#f4f8fc"></div>
<svg style="left:422px;top:328px" width="22" height="21" viewBox="0 0 22 21" shape-rendering="crispEdges"><rect x="12" y="4" width="1" height="1" fill="#000"/><rect x="12" y="5" width="1" height="1" fill="#000"/><rect x="3" y="6" width="8" height="1" fill="#808080"/><rect x="11" y="6" width="1" height="1" fill="#000"/><rect x="12" y="6" width="1" height="1" fill="#ff00ff"/><rect x="13" y="6" width="1" height="1" fill="#000"/><rect x="14" y="6" width="5" height="1" fill="#808080"/><rect x="3" y="7" width="1" height="1" fill="#808080"/><rect x="4" y="7" width="6" height="1" fill="#fff"/><rect x="10" y="7" width="1" height="1" fill="#000"/><rect x="11" y="7" width="4" height="1" fill="#ff00ff"/><rect x="15" y="7" width="4" height="1" fill="#000"/><rect x="3" y="8" width="1" height="1" fill="#808080"/><rect x="4" y="8" width="1" height="1" fill="#fff"/><rect x="5" y="8" width="1" height="1" fill="#808080"/><rect x="6" y="8" width="3" height="1" fill="#c8c8c8"/><rect x="9" y="8" width="1" height="1" fill="#000"/><rect x="10" y="8" width="4" height="1" fill="#ff00ff"/><rect x="14" y="8" width="1" height="1" fill="#000"/><rect x="15" y="8" width="1" height="1" fill="#c8c8c8"/><rect x="16" y="8" width="3" height="1" fill="#000"/><rect x="3" y="9" width="1" height="1" fill="#808080"/><rect x="4" y="9" width="1" height="1" fill="#fff"/><rect x="5" y="9" width="1" height="1" fill="#808080"/><rect x="6" y="9" width="4" height="1" fill="#c8c8c8"/><rect x="10" y="9" width="2" height="1" fill="#000"/><rect x="12" y="9" width="1" height="1" fill="#ff00ff"/><rect x="13" y="9" width="1" height="1" fill="#000"/><rect x="14" y="9" width="3" height="1" fill="#c8c8c8"/><rect x="17" y="9" width="2" height="1" fill="#000"/><rect x="3" y="10" width="1" height="1" fill="#808080"/><rect x="4" y="10" width="1" height="1" fill="#fff"/><rect x="5" y="10" width="1" height="1" fill="#808080"/><rect x="6" y="10" width="5" height="1" fill="#c8c8c8"/><rect x="11" y="10" width="1" height="1" fill="#000"/><rect x="12" y="10" width="1" height="1" fill="#ff00ff"/><rect x="13" y="10" width="1" height="1" fill="#000"/><rect x="14" y="10" width="3" height="1" fill="#c8c8c8"/><rect x="17" y="10" width="2" height="1" fill="#000"/><rect x="3" y="11" width="1" height="1" fill="#808080"/><rect x="4" y="11" width="1" height="1" fill="#fff"/><rect x="5" y="11" width="1" height="1" fill="#808080"/><rect x="6" y="11" width="6" height="1" fill="#c8c8c8"/><rect x="12" y="11" width="1" height="1" fill="#000"/><rect x="13" y="11" width="4" height="1" fill="#c8c8c8"/><rect x="17" y="11" width="2" height="1" fill="#000"/><rect x="3" y="12" width="1" height="1" fill="#808080"/><rect x="4" y="12" width="1" height="1" fill="#fff"/><rect x="5" y="12" width="1" height="1" fill="#808080"/><rect x="6" y="12" width="11" height="1" fill="#c8c8c8"/><rect x="17" y="12" width="2" height="1" fill="#000"/><rect x="3" y="13" width="1" height="1" fill="#808080"/><rect x="4" y="13" width="1" height="1" fill="#000"/><rect x="5" y="13" width="13" height="1" fill="#c8c8c8"/><rect x="18" y="13" width="2" height="1" fill="#000"/><rect x="3" y="14" width="2" height="1" fill="#000"/><rect x="5" y="14" width="1" height="1" fill="#00ffff"/><rect x="6" y="14" width="1" height="1" fill="#000"/><rect x="7" y="14" width="9" height="1" fill="#c8c8c8"/><rect x="16" y="14" width="1" height="1" fill="#000"/><rect x="17" y="14" width="1" height="1" fill="#ffff00"/><rect x="18" y="14" width="2" height="1" fill="#000"/><rect x="2" y="15" width="1" height="1" fill="#000"/><rect x="3" y="15" width="4" height="1" fill="#00ffff"/><rect x="7" y="15" width="1" height="1" fill="#000"/><rect x="8" y="15" width="7" height="1" fill="#c8c8c8"/><rect x="15" y="15" width="1" height="1" fill="#000"/><rect x="16" y="15" width="4" height="1" fill="#ffff00"/><rect x="20" y="15" width="1" height="1" fill="#000"/><rect x="3" y="16" width="2" height="1" fill="#000"/><rect x="5" y="16" width="3" height="1" fill="#00ffff"/><rect x="8" y="16" width="1" height="1" fill="#000"/><rect x="9" y="16" width="6" height="1" fill="#c8c8c8"/><rect x="15" y="16" width="2" height="1" fill="#000"/><rect x="17" y="16" width="2" height="1" fill="#ffff00"/><rect x="19" y="16" width="1" height="1" fill="#000"/><rect x="3" y="17" width="3" height="1" fill="#000"/><rect x="6" y="17" width="1" height="1" fill="#00ffff"/><rect x="7" y="17" width="3" height="1" fill="#000"/><rect x="10" y="17" width="3" height="1" fill="#fff"/><rect x="13" y="17" width="4" height="1" fill="#000"/><rect x="17" y="17" width="1" height="1" fill="#ffff00"/><rect x="18" y="17" width="2" height="1" fill="#000"/><rect x="3" y="18" width="17" height="1" fill="#000"/><rect x="6" y="19" width="1" height="1" fill="#000"/><rect x="16" y="19" width="1" height="1" fill="#000"/><rect x="6" y="20" width="1" height="1" fill="#000"/><rect x="16" y="20" width="1" height="1" fill="#000"/></svg>
<div class="t" style="left:447px;top:334px;font-size:14.5px;color:#9c9c9c">October_Register.xlsx - Sheet1 (Code)</div>
<!-- child buttons -->
<div class="a cbtn" style="left:1681px;top:328px"><div class="a" style="left:11px;top:9px;width:17px;height:6px;background:linear-gradient(#fafafa,#dcdcdc);border:1px solid #4b5060;border-radius:2px;box-shadow:1px 1px 1px rgba(60,70,90,.35)"></div></div>
<div class="a cbtn" style="left:1725px;top:328px"><div class="a" style="left:11px;top:3px;width:17px;height:15px;background:linear-gradient(#fafafa,#dcdcdc);border:1px solid #4b5060;border-radius:2px;box-shadow:1px 1px 1px rgba(60,70,90,.35)"><div class="a" style="left:3px;top:3px;width:9px;height:7px;background:#c4d1e0;border:1px solid #4b5060"></div></div></div>
<div class="a cbtn" style="left:1769px;top:328px"><svg style="left:11px;top:3px" width="18" height="15" viewBox="0 0 18 15"><path d="M3 2.5 L15 12.5 M15 2.5 L3 12.5" stroke="#4b5060" stroke-width="5.2" stroke-linecap="round"/><path d="M3 2.5 L15 12.5 M15 2.5 L3 12.5" stroke="#ececec" stroke-width="3.2" stroke-linecap="round"/></svg></div>
<!-- inner panel -->
<div class="a" style="left:421px;top:355px;width:1392px;height:618px;background:#f0f0f0"></div>
<div class="a" style="left:421px;top:972px;width:1392px;height:1px;background:#fdfdfd"></div>
<div class="a combo" style="left:431px;top:357px;width:681px;height:24px"></div>
<div class="t" style="left:434px;top:361px;font-size:13.4px;font-weight:bold;color:#000">Worksheet</div>
<svg style="left:1096px;top:366px" width="11" height="7" viewBox="0 0 11 7"><path d="M0.5 0.5 L5.5 5.5 L10.5 0.5" fill="none" stroke="#505050" stroke-width="1.1"/></svg>
<div class="a combo" style="left:1122px;top:357px;width:681px;height:24px"></div>
<div class="t" style="left:1127px;top:361px;font-size:13.4px;font-weight:bold;color:#000">SelectionChange</div>
<svg style="left:1787px;top:366px" width="11" height="7" viewBox="0 0 11 7"><path d="M0.5 0.5 L5.5 5.5 L10.5 0.5" fill="none" stroke="#505050" stroke-width="1.1"/></svg>
<!-- code area -->
<div class="a" style="left:421px;top:382px;width:1391px;height:1px;background:#b8b8b8"></div>
<div class="a" style="left:421px;top:383px;width:1391px;height:2px;background:#696969"></div>
<div class="a" style="left:421px;top:383px;width:2px;height:587px;background:#696969"></div>
<div class="a" style="left:423px;top:385px;width:25px;height:566px;background:#f0f0f0"></div>
<div class="a" style="left:448px;top:385px;width:1px;height:566px;background:#000"></div>
<div class="a" style="left:449px;top:385px;width:1342px;height:566px;background:#fff;overflow:hidden">
<div class="a" style="left:170px;top:362px;width:270px;height:20px;background:#0078d7"></div>
<div class="code" style="left:12px;top:3px"><span class="kw">Private Sub</span> Worksheet_SelectionChange(<span class="kw">ByVal</span> Target <span class="kw">As</span> Range)
    <span class="cm">' This code automatically runs when you click a cell on this sheet.</span>

    <span class="kw">Const</span> CLICK_COLUMN <span class="kw">As</span> <span class="kw">String</span> = "A"
    <span class="kw">Const</span> FIRST_DATA_ROW <span class="kw">As</span> <span class="kw">Long</span> = 2

    <span class="cm">' Check if: Column A, below header row, single cell, and the cell is not empty</span>
    <span class="kw">If Not</span> Intersect(Target, Me.Columns(CLICK_COLUMN)) <span class="kw">Is Nothing And</span> Target.Row &gt;= FIRST_DATA_ROW <span class="kw">Then</span>
        <span class="kw">If</span> Target.Cells.CountLarge = 1 <span class="kw">Then</span>

            <span class="kw">If</span> Target.Value &lt;&gt; "" <span class="kw">Then</span>
                <span class="cm">' Disable events to prevent re-triggering when switching sheets</span>
                Application.EnableEvents = <span class="kw">False</span>

                <span class="kw">Dim</span> selectedName <span class="kw">As String</span>
                selectedName = Target.Value

                <span class="cm">' Calls the main function you already pasted into Module1</span>
                <span class="sel">Call UpdateIndividualReport</span>(selectedName)

                <span class="cm">' Re-enable events</span>
                Application.EnableEvents = <span class="kw">True</span>
            <span class="kw">End If</span>
        <span class="kw">End If</span>
    <span class="kw">End If</span>
<span class="kw">End Sub</span></div>
</div>
<!-- v scrollbar -->
<div class="a" style="left:1791px;top:385px;width:21px;height:566px;background:#f0f0f0;border-right:1px solid #e2e2e2"></div>
<div class="a" style="left:1812px;top:355px;width:1px;height:618px;background:#fdfdfd"></div>
<div class="a" style="left:1790px;top:385px;width:21px;height:7px;background:#efefef;border-top:1px solid #fff;border-right:2px solid #696969;border-bottom:2px solid #696969;border-left:1px solid #fff"></div>
<div class="a" style="left:1798px;top:412px;width:6px;height:517px;background:#858585"></div>
<!-- bottom bar -->
<div class="a" style="left:423px;top:951px;width:1389px;height:21px;background:#f0f0f0"></div>
<div class="a" style="left:423px;top:951px;width:22px;height:20px;background:#f0f0f0;border-right:2px solid #696969;border-bottom:2px solid #696969;border-left:1px solid #fff;border-top:1px solid #fff"></div>
<div class="a" style="left:445px;top:950px;width:20px;height:20px;background:#ececec;border-top:1px solid #696969;border-left:2px solid #696969"></div>
<svg style="left:428px;top:955px" width="10" height="5" viewBox="0 0 10 5" shape-rendering="crispEdges"><rect x="0" y="0" width="10" height="1" fill="#000"/><rect x="3" y="2" width="7" height="1" fill="#000"/><rect x="0" y="4" width="10" height="1" fill="#000"/></svg>
<svg style="left:449px;top:956px" width="10" height="9" viewBox="0 0 10 9" shape-rendering="crispEdges"><rect x="0" y="0" width="10" height="1" fill="#000"/><rect x="3" y="2" width="7" height="1" fill="#000"/><rect x="0" y="4" width="10" height="1" fill="#000"/><rect x="3" y="6" width="7" height="1" fill="#000"/><rect x="0" y="8" width="10" height="1" fill="#000"/></svg>
<div class="a" style="left:486px;top:958px;width:167px;height:6px;background:#858585"></div>
<svg style="left:1797px;top:958px" width="11" height="11" viewBox="0 0 11 11" shape-rendering="crispEdges"><path d="M8 0h3v3h-3zM4 4h3v3h-3zM8 4h3v3h-3zM0 8h3v3h-3zM4 8h3v3h-3zM8 8h3v3h-3z" fill="#b8b8b8"/></svg>

<div class="a" style="left:188px;top:1044px;width:199px;height:34px;border:1px solid #4f4f4f;border-radius:7px 7px 0 0;background:linear-gradient(#c3d0df,#d3dfeb)"></div>
<div class="a" style="left:189px;top:1050px;width:1px;height:26px;background:#f0f5fa"></div>
<svg style="left:190px;top:1048px" width="24" height="23" viewBox="0 0 24 23" shape-rendering="crispEdges"><rect x="12" y="3" width="2" height="1" fill="#000"/><rect x="20" y="3" width="1" height="1" fill="#000"/><rect x="10" y="4" width="3" height="1" fill="#000"/><rect x="13" y="4" width="1" height="1" fill="#ffff00"/><rect x="14" y="4" width="1" height="1" fill="#000"/><rect x="19" y="4" width="1" height="1" fill="#000"/><rect x="20" y="4" width="1" height="1" fill="#ff00ff"/><rect x="21" y="4" width="2" height="1" fill="#000"/><rect x="10" y="5" width="2" height="1" fill="#000"/><rect x="12" y="5" width="2" height="1" fill="#ffff00"/><rect x="14" y="5" width="2" height="1" fill="#000"/><rect x="18" y="5" width="1" height="1" fill="#000"/><rect x="19" y="5" width="2" height="1" fill="#ff00ff"/><rect x="21" y="5" width="2" height="1" fill="#000"/><rect x="10" y="6" width="2" height="1" fill="#000"/><rect x="12" y="6" width="1" height="1" fill="#ffff00"/><rect x="13" y="6" width="3" height="1" fill="#000"/><rect x="18" y="6" width="1" height="1" fill="#000"/><rect x="19" y="6" width="2" height="1" fill="#ff00ff"/><rect x="21" y="6" width="2" height="1" fill="#000"/><rect x="10" y="7" width="2" height="1" fill="#000"/><rect x="12" y="7" width="1" height="1" fill="#ffff00"/><rect x="13" y="7" width="3" height="1" fill="#000"/><rect x="18" y="7" width="1" height="1" fill="#000"/><rect x="19" y="7" width="1" height="1" fill="#ff00ff"/><rect x="20" y="7" width="3" height="1" fill="#000"/><rect x="10" y="8" width="2" height="1" fill="#000"/><rect x="12" y="8" width="1" height="1" fill="#ffff00"/><rect x="13" y="8" width="3" height="1" fill="#000"/><rect x="18" y="8" width="1" height="1" fill="#000"/><rect x="19" y="8" width="1" height="1" fill="#ff00ff"/><rect x="20" y="8" width="3" height="1" fill="#000"/><rect x="9" y="9" width="1" height="1" fill="#00ffff"/><rect x="10" y="9" width="5" height="1" fill="#000"/><rect x="15" y="9" width="1" height="1" fill="#00ffff"/><rect x="16" y="9" width="1" height="1" fill="#000"/><rect x="18" y="9" width="1" height="1" fill="#00ffff"/><rect x="19" y="9" width="2" height="1" fill="#000"/><rect x="8" y="10" width="1" height="1" fill="#000"/><rect x="9" y="10" width="1" height="1" fill="#00ffff"/><rect x="10" y="10" width="1" height="1" fill="#000"/><rect x="15" y="10" width="1" height="1" fill="#000"/><rect x="16" y="10" width="1" height="1" fill="#00ffff"/><rect x="17" y="10" width="1" height="1" fill="#000"/><rect x="19" y="10" width="2" height="1" fill="#000"/><rect x="8" y="11" width="1" height="1" fill="#000"/><rect x="9" y="11" width="1" height="1" fill="#00ffff"/><rect x="10" y="11" width="1" height="1" fill="#000"/><rect x="14" y="11" width="1" height="1" fill="#000"/><rect x="15" y="11" width="1" height="1" fill="#00ffff"/><rect x="16" y="11" width="2" height="1" fill="#000"/><rect x="4" y="12" width="3" height="1" fill="#000"/><rect x="8" y="12" width="1" height="1" fill="#00ffff"/><rect x="9" y="12" width="1" height="1" fill="#000"/><rect x="11" y="12" width="4" height="1" fill="#000"/><rect x="15" y="12" width="1" height="1" fill="#00ffff"/><rect x="16" y="12" width="2" height="1" fill="#000"/><rect x="18" y="12" width="1" height="1" fill="#00ffff"/><rect x="19" y="12" width="4" height="1" fill="#000"/><rect x="3" y="13" width="1" height="1" fill="#000"/><rect x="4" y="13" width="3" height="1" fill="#ff00ff"/><rect x="7" y="13" width="2" height="1" fill="#000"/><rect x="9" y="13" width="1" height="1" fill="#fff"/><rect x="10" y="13" width="1" height="1" fill="#000"/><rect x="11" y="13" width="4" height="1" fill="#00ff00"/><rect x="15" y="13" width="3" height="1" fill="#000"/><rect x="18" y="13" width="5" height="1" fill="#00ffff"/><rect x="23" y="13" width="1" height="1" fill="#000"/><rect x="3" y="14" width="1" height="1" fill="#000"/><rect x="4" y="14" width="4" height="1" fill="#ff00ff"/><rect x="8" y="14" width="1" height="1" fill="#000"/><rect x="10" y="14" width="1" height="1" fill="#000"/><rect x="11" y="14" width="4" height="1" fill="#00ff00"/><rect x="15" y="14" width="1" height="1" fill="#000"/><rect x="17" y="14" width="1" height="1" fill="#fff"/><rect x="18" y="14" width="1" height="1" fill="#000"/><rect x="19" y="14" width="4" height="1" fill="#00ffff"/><rect x="23" y="14" width="1" height="1" fill="#000"/><rect x="4" y="15" width="1" height="1" fill="#000"/><rect x="5" y="15" width="3" height="1" fill="#ff00ff"/><rect x="8" y="15" width="1" height="1" fill="#000"/><rect x="11" y="15" width="4" height="1" fill="#000"/><rect x="15" y="15" width="1" height="1" fill="#00ffff"/><rect x="16" y="15" width="1" height="1" fill="#000"/><rect x="18" y="15" width="1" height="1" fill="#fff"/><rect x="19" y="15" width="4" height="1" fill="#000"/><rect x="4" y="16" width="5" height="1" fill="#000"/><rect x="11" y="16" width="4" height="1" fill="#000"/><rect x="15" y="16" width="1" height="1" fill="#00ffff"/><rect x="16" y="16" width="1" height="1" fill="#000"/><rect x="17" y="16" width="1" height="1" fill="#fff"/><rect x="18" y="16" width="4" height="1" fill="#000"/><rect x="15" y="17" width="2" height="1" fill="#00ffff"/><rect x="17" y="17" width="2" height="1" fill="#000"/><rect x="15" y="18" width="2" height="1" fill="#000"/><rect x="17" y="18" width="2" height="1" fill="#ffff00"/><rect x="19" y="18" width="3" height="1" fill="#000"/><rect x="15" y="19" width="1" height="1" fill="#000"/><rect x="16" y="19" width="3" height="1" fill="#ffff00"/><rect x="19" y="19" width="2" height="1" fill="#000"/><rect x="15" y="20" width="1" height="1" fill="#000"/><rect x="16" y="20" width="2" height="1" fill="#ffff00"/><rect x="18" y="20" width="2" height="1" fill="#000"/><rect x="16" y="21" width="1" height="1" fill="#000"/><rect x="17" y="21" width="1" height="1" fill="#ffff00"/><rect x="18" y="21" width="1" height="1" fill="#000"/><rect x="17" y="22" width="1" height="1" fill="#000"/></svg>
<div class="t" style="left:218px;top:1055px;font-size:14.5px;color:#a4a9b0">Oct...</div>
<div class="a cbtn" style="left:252px;top:1049px;width:42px;height:24px"></div>
<div class="a" style="left:269px;top:1051px;width:14px;height:13px;background:linear-gradient(#fbfbfb,#dedede);border:1px solid #4b5060;border-radius:1px"><div class="a" style="left:3px;top:3px;width:6px;height:5px;background:#c4d1e0;border:1px solid #4b5060"></div></div>
<div class="a" style="left:262px;top:1057px;width:15px;height:13px;background:linear-gradient(#fbfbfb,#dedede);border:1px solid #4b5060;border-radius:1px;box-shadow:1px 1px 1px rgba(60,70,90,.35)"><div class="a" style="left:3px;top:3px;width:7px;height:5px;background:#c4d1e0;border:1px solid #4b5060"></div></div>
<div class="a cbtn" style="left:296px;top:1049px;width:42px;height:24px"><div class="a" style="left:12px;top:4px;width:17px;height:15px;background:linear-gradient(#fafafa,#dcdcdc);border:1px solid #4b5060;border-radius:2px;box-shadow:1px 1px 1px rgba(60,70,90,.35)"><div class="a" style="left:3px;top:3px;width:9px;height:7px;background:#c4d1e0;border:1px solid #4b5060"></div></div></div>
<div class="a cbtn" style="left:340px;top:1049px;width:42px;height:24px"><svg style="left:11px;top:3px" width="18" height="16" viewBox="0 0 18 16"><path d="M3 2.5 L15 13 M15 2.5 L3 13" stroke="#4b5060" stroke-width="5.2" stroke-linecap="round"/><path d="M3 2.5 L15 13 M15 2.5 L3 13" stroke="#ececec" stroke-width="3.2" stroke-linecap="round"/></svg></div>
<div class="a" style="left:815px;top:463px;width:311px;height:224px;border-radius:8px;box-shadow:0 12px 44px rgba(0,0,0,0.34),0 0 10px rgba(0,0,0,0.12)"></div>
<div class="a" style="left:815px;top:463px;width:311px;height:224px;border:1px solid #a8a8a8;border-radius:8px;background:#f0f0f0;overflow:hidden">
  <div class="a" style="left:0;top:0;width:309px;height:37px;background:#f9efee"></div>
  <div class="a" style="left:0;top:37px;width:309px;height:123px;background:#fff"></div>
</div>
<div class="t" style="left:824px;top:475px;font-size:15px;color:#000">Microsoft Visual Basic for Applications</div>
<svg style="left:1097px;top:476px" width="14" height="13" viewBox="0 0 14 13"><path d="M0.8 0.5 L13.2 12.5 M13.2 0.5 L0.8 12.5" stroke="#1a1a1a" stroke-width="1.15"/></svg>
<svg style="left:844px;top:535px" width="38" height="38" viewBox="0 0 38 38">
  <defs><linearGradient id="wg" x1="0" y1="0" x2="0" y2="1"><stop offset="0" stop-color="#ffe100"/><stop offset="1" stop-color="#fbb700"/></linearGradient></defs>
  <path d="M16.6 2.6 Q19 -1 21.4 2.6 L36.4 32.4 Q38 36.5 33.5 36.5 H4.5 Q0 36.5 1.6 32.4 Z" fill="url(#wg)" stroke="#e2a000" stroke-width="1.3"/>
  <rect x="18" y="11" width="2" height="14" fill="#111"/>
  <circle cx="19" cy="29.5" r="1.6" fill="#111"/>
</svg>
<div class="t" style="left:893px;top:537px;font-size:14px;color:#000">Compile error:</div>
<div class="t" style="left:893px;top:575px;font-size:14px;color:#000">Sub or Function not defined</div>
<div class="a" style="left:894px;top:640px;width:98px;height:31px;background:#fdfdfd;border:1.5px solid #0a67c3;border-radius:4px"></div>
<div class="t" style="left:894px;top:649px;width:98px;text-align:center;font-size:14px;color:#000">OK</div>
<div class="a" style="left:1004px;top:640px;width:98px;height:31px;background:#fdfdfd;border:1px solid #d2d2d2;border-radius:4px"></div>
<div class="t" style="left:1004px;top:649px;width:98px;text-align:center;font-size:14px;color:#000">Help</div>

</body></html>
